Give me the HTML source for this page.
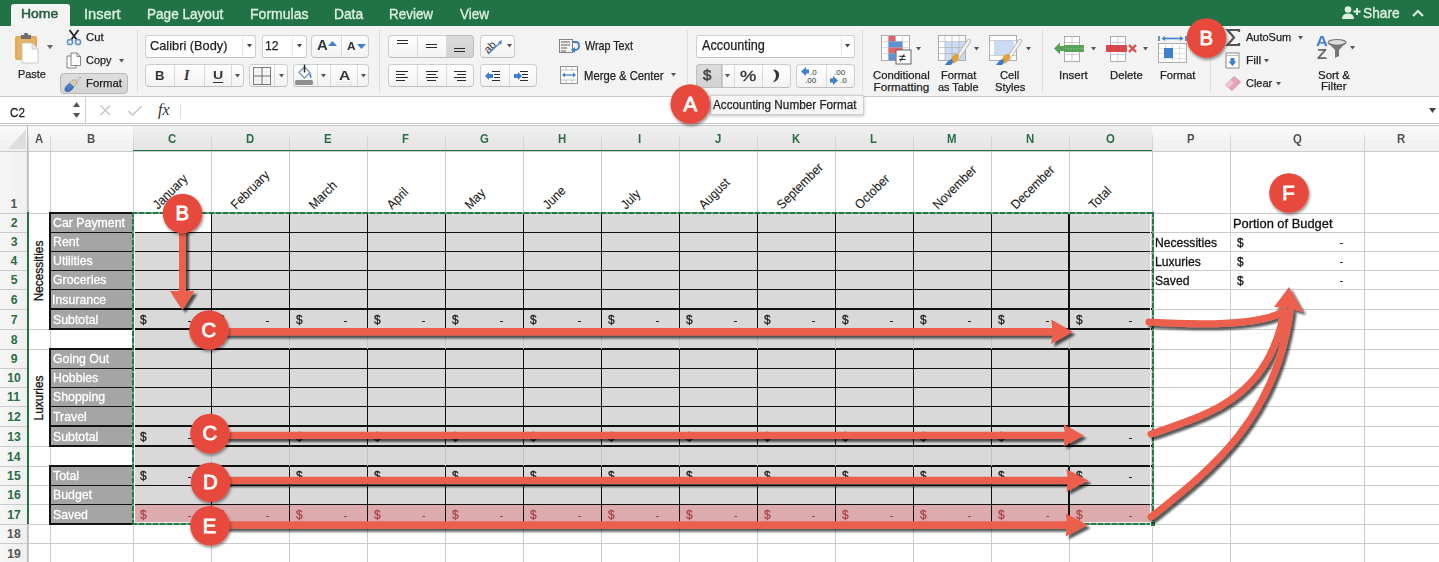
<!DOCTYPE html>
<html><head><meta charset="utf-8"><style>
html,body{margin:0;padding:0;}
body{width:1439px;height:562px;overflow:hidden;position:relative;background:#fff;font-family:"Liberation Sans",sans-serif;}
svg{position:absolute;overflow:visible;}
</style></head><body>
<div style="position:absolute;left:0px;top:0px;width:1439px;height:26px;background:#217346;"></div>
<div style="position:absolute;left:11px;top:4px;width:59px;height:23px;background:#f3f3f3;border-radius:3px 3px 0 0;"></div>
<div style="position:absolute;left:21.35px;top:7.46px;font-size:13.52px;line-height:13.52px;color:#245c3f;font-weight:normal;white-space:nowrap;transform:scaleX(1.0335);transform-origin:0 0;-webkit-text-stroke:0.5px #245c3f;">Home</div>
<div style="position:absolute;left:83.95px;top:6.70px;font-size:14.54px;line-height:14.54px;color:#dcf1df;font-weight:normal;white-space:nowrap;transform:scaleX(1.0085);transform-origin:0 0;-webkit-text-stroke:0.35px #dcf1df;">Insert</div>
<div style="position:absolute;left:147.39px;top:6.70px;font-size:14.54px;line-height:14.54px;color:#dcf1df;font-weight:normal;white-space:nowrap;transform:scaleX(0.9337);transform-origin:0 0;-webkit-text-stroke:0.35px #dcf1df;">Page Layout</div>
<div style="position:absolute;left:250.35px;top:6.70px;font-size:14.54px;line-height:14.54px;color:#dcf1df;font-weight:normal;white-space:nowrap;transform:scaleX(0.9667);transform-origin:0 0;-webkit-text-stroke:0.35px #dcf1df;">Formulas</div>
<div style="position:absolute;left:334.07px;top:6.70px;font-size:14.54px;line-height:14.54px;color:#dcf1df;font-weight:normal;white-space:nowrap;transform:scaleX(0.9488);transform-origin:0 0;-webkit-text-stroke:0.35px #dcf1df;">Data</div>
<div style="position:absolute;left:389.20px;top:6.70px;font-size:14.54px;line-height:14.54px;color:#dcf1df;font-weight:normal;white-space:nowrap;transform:scaleX(0.9247);transform-origin:0 0;-webkit-text-stroke:0.35px #dcf1df;">Review</div>
<div style="position:absolute;left:459.94px;top:6.70px;font-size:14.54px;line-height:14.54px;color:#dcf1df;font-weight:normal;white-space:nowrap;transform:scaleX(0.9309);transform-origin:0 0;-webkit-text-stroke:0.35px #dcf1df;">View</div>
<div style="position:absolute;left:1363.37px;top:5.50px;font-size:14.54px;line-height:14.54px;color:#dcf1df;font-weight:normal;white-space:nowrap;transform:scaleX(0.9472);transform-origin:0 0;-webkit-text-stroke:0.35px #dcf1df;">Share</div>
<div style="position:absolute;left:0px;top:26px;width:1439px;height:70px;background:#f3f3f3;"></div>
<div style="position:absolute;left:0px;top:96px;width:1439px;height:1px;background:#c9c9c9;"></div>
<div style="position:absolute;left:0px;top:97px;width:1439px;height:26px;background:#fff;"></div>
<div style="position:absolute;left:0px;top:123px;width:1439px;height:1px;background:#c4c4c4;"></div>
<div style="position:absolute;left:0px;top:125px;width:1439px;height:1px;background:#c4c4c4;"></div>
<div style="position:absolute;left:85px;top:97px;width:1px;height:26px;background:#d0d0d0;"></div>
<div style="position:absolute;left:9.91px;top:105.63px;font-size:13.08px;line-height:13.08px;color:#222;font-weight:normal;white-space:nowrap;transform:scaleX(0.8896);transform-origin:0 0;-webkit-text-stroke:0.3px #222;">C2</div>
<svg style="left:14px;top:32px" width="28" height="32" viewBox="0 0 28 32"><rect x="1" y="4" width="22" height="24" rx="2" fill="#e3a95a"/><rect x="3" y="6" width="18" height="20" fill="#f0c078" opacity="0.35"/><path d="M7,3 h10 v4 h-10 z" fill="#6f6f6f"/><circle cx="12" cy="3" r="2.2" fill="#6f6f6f"/><path d="M8,11 h10 l6,6 v14 h-16 z" fill="#fff" stroke="#bdbdbd" stroke-width="0.8"/><path d="M18,11 v6 h6" fill="#eee" stroke="#bdbdbd" stroke-width="0.8"/></svg>
<svg style="left:47.0px;top:45.4px" width="6" height="4.199999999999999"><polygon points="0,0 6,0 3.0,4.199999999999999" fill="#666"/></svg>
<div style="position:absolute;left:17.61px;top:68.78px;font-size:11.83px;line-height:11.83px;color:#222;font-weight:normal;white-space:nowrap;transform:scaleX(0.9215);transform-origin:0 0;-webkit-text-stroke:0.25px #222;">Paste</div>
<svg style="left:66px;top:29px" width="16" height="17" viewBox="0 0 16 17"><path d="M3.5,1 L11,11 M12.5,1 L5,11" stroke="#222" stroke-width="1.8"/><circle cx="4" cy="13" r="2.6" fill="none" stroke="#5b8fd0" stroke-width="1.5"/><circle cx="12" cy="13" r="2.6" fill="none" stroke="#5b8fd0" stroke-width="1.5"/></svg>
<div style="position:absolute;left:86.42px;top:32.40px;font-size:10.87px;line-height:10.87px;color:#222;font-weight:normal;white-space:nowrap;transform:scaleX(1.0438);transform-origin:0 0;-webkit-text-stroke:0.25px #222;">Cut</div>
<svg style="left:66px;top:52px" width="16" height="18" viewBox="0 0 16 18"><path d="M1,4 h6 l3,3 v9 h-9 z" fill="#fff" stroke="#777" stroke-width="0.9"/><path d="M5,1 h6 l3.5,3.5 v9 h-9.5 z" fill="#fff" stroke="#777" stroke-width="0.9"/><path d="M11,1 v3.5 h3.5" fill="none" stroke="#777" stroke-width="0.9"/></svg>
<div style="position:absolute;left:86.44px;top:55.40px;font-size:10.87px;line-height:10.87px;color:#222;font-weight:normal;white-space:nowrap;transform:scaleX(1.0078);transform-origin:0 0;-webkit-text-stroke:0.25px #222;">Copy</div>
<svg style="left:119.0px;top:59.25px" width="5" height="3.5"><polygon points="0,0 5,0 2.5,3.5" fill="#555"/></svg>
<div style="position:absolute;left:60px;top:73px;width:68px;height:21px;box-sizing:border-box;border:1px solid #b9b9b9;border-radius:4px;background:linear-gradient(#dedede,#d3d3d3);"></div>
<svg style="left:63px;top:75px" width="20" height="18" viewBox="0 0 20 18"><path d="M12.5,6 L16.5,2 Q18,1.5 17.5,3 L13.5,7.5 Z" fill="#f4f4f4" stroke="#9a9a9a" stroke-width="0.7"/><path d="M9,5.5 Q11,3.5 13.5,6 Q15,8 13,10 L11,12 L6.5,8 Z" fill="#d9cdb5" stroke="#9d8f72" stroke-width="0.6"/><path d="M6.5,8 L11,12 Q9,16 5.5,17 Q3,17.5 1.5,15.5 Q1,13.5 3,11 Z" fill="#3d6fb8"/><path d="M3,13 L8,9.5 M4.5,15 L9.5,11" stroke="#6f9ad6" stroke-width="0.8"/></svg>
<div style="position:absolute;left:86.07px;top:78.40px;font-size:10.87px;line-height:10.87px;color:#222;font-weight:normal;white-space:nowrap;transform:scaleX(1.0460);transform-origin:0 0;-webkit-text-stroke:0.25px #222;">Format</div>
<div style="position:absolute;left:137px;top:30px;width:1px;height:62px;background:#dedede;"></div>
<div style="position:absolute;left:145px;top:35px;width:111px;height:23px;box-sizing:border-box;border:1px solid #d0d0d0;border-bottom-color:#c2c2c2;border-radius:3px;background:#fff;"></div>
<div style="position:absolute;left:241.5px;top:37px;width:1px;height:19px;background:#e6e6e6;"></div>
<div style="position:absolute;left:149.85px;top:39.30px;font-size:13.11px;line-height:13.11px;color:#222;font-weight:normal;white-space:nowrap;transform:scaleX(0.9752);transform-origin:0 0;-webkit-text-stroke:0.25px #222;">Calibri (Body)</div>
<svg style="left:247.0px;top:44.25px" width="5" height="3.5"><polygon points="0,0 5,0 2.5,3.5" fill="#444"/></svg>
<div style="position:absolute;left:262px;top:35px;width:45px;height:23px;box-sizing:border-box;border:1px solid #d0d0d0;border-bottom-color:#c2c2c2;border-radius:3px;background:#fff;"></div>
<div style="position:absolute;left:292px;top:37px;width:1px;height:19px;background:#e6e6e6;"></div>
<div style="position:absolute;left:265.07px;top:39.30px;font-size:13.11px;line-height:13.11px;color:#222;font-weight:normal;white-space:nowrap;transform:scaleX(0.9284);transform-origin:0 0;-webkit-text-stroke:0.25px #222;">12</div>
<svg style="left:297.0px;top:44.25px" width="5" height="3.5"><polygon points="0,0 5,0 2.5,3.5" fill="#444"/></svg>
<div style="position:absolute;left:311px;top:35px;width:58px;height:23px;box-sizing:border-box;border:1px solid #cdcdcd;border-bottom-color:#bdbdbd;border-radius:4px;background:linear-gradient(#fefefe,#f3f3f3);"></div>
<div style="position:absolute;left:341px;top:36px;width:1px;height:21px;background:#d9d9d9;"></div>
<div style="position:absolute;left:316.63px;top:39.31px;font-size:13.81px;line-height:13.81px;color:#333;font-weight:bold;white-space:nowrap;transform:scaleX(1.0794);transform-origin:0 0;">A</div>
<svg style="left:328px;top:41px" width="9" height="6" viewBox="0 0 9 6"><polygon points="0,5 4.5,0 9,5" fill="#3f7fcf"/></svg>
<div style="position:absolute;left:346.70px;top:41.27px;font-size:10.90px;line-height:10.90px;color:#333;font-weight:bold;white-space:nowrap;transform:scaleX(1.0938);transform-origin:0 0;">A</div>
<svg style="left:357px;top:44px" width="9" height="6" viewBox="0 0 9 6"><polygon points="0,0 9,0 4.5,5" fill="#3f7fcf"/></svg>
<div style="position:absolute;left:145px;top:64px;width:99px;height:23px;box-sizing:border-box;border:1px solid #cdcdcd;border-bottom-color:#bdbdbd;border-radius:4px;background:linear-gradient(#fefefe,#f3f3f3);"></div>
<div style="position:absolute;left:174px;top:65px;width:1px;height:21px;background:#d9d9d9;"></div>
<div style="position:absolute;left:203.5px;top:65px;width:1px;height:21px;background:#d9d9d9;"></div>
<div style="position:absolute;left:231px;top:65px;width:1px;height:21px;background:#d9d9d9;"></div>
<div style="position:absolute;left:154.62px;top:70.04px;font-size:12.35px;line-height:12.35px;color:#333;font-weight:bold;white-space:nowrap;transform:scaleX(1.0617);transform-origin:0 0;">B</div>
<div style="position:absolute;left:184px;top:68px;font-family:'Liberation Serif',serif;font-style:italic;font-weight:bold;font-size:14px;line-height:16px;color:#333;">I</div>
<div style="position:absolute;left:212.65px;top:70.27px;font-size:10.90px;line-height:10.90px;color:#333;font-weight:bold;white-space:nowrap;transform:scaleX(1.2972);transform-origin:0 0;">U</div>
<div style="position:absolute;left:213px;top:82px;width:10px;height:1.2px;background:#333;"></div>
<svg style="left:235.0px;top:73.75px" width="5" height="3.5"><polygon points="0,0 5,0 2.5,3.5" fill="#555"/></svg>
<div style="position:absolute;left:249px;top:64px;width:38.5px;height:23px;box-sizing:border-box;border:1px solid #cdcdcd;border-bottom-color:#bdbdbd;border-radius:4px;background:linear-gradient(#fefefe,#f3f3f3);"></div>
<div style="position:absolute;left:274px;top:65px;width:1px;height:21px;background:#d9d9d9;"></div>
<svg style="left:253px;top:67px" width="18" height="18" viewBox="0 0 18 18"><rect x="0.5" y="0.5" width="17" height="17" fill="none" stroke="#777" stroke-width="1"/><path d="M9,0.5 V17.5 M0.5,9 H17.5" stroke="#666" stroke-width="1"/><path d="M4.75,0.5 V17.5 M13.25,0.5 V17.5 M0.5,4.75 H17.5 M0.5,13.25 H17.5" stroke="#ccc" stroke-width="0.6" stroke-dasharray="1,1"/></svg>
<svg style="left:278.5px;top:73.75px" width="5" height="3.5"><polygon points="0,0 5,0 2.5,3.5" fill="#555"/></svg>
<div style="position:absolute;left:293px;top:64px;width:76px;height:23px;box-sizing:border-box;border:1px solid #cdcdcd;border-bottom-color:#bdbdbd;border-radius:4px;background:linear-gradient(#fefefe,#f3f3f3);"></div>
<div style="position:absolute;left:316.5px;top:65px;width:1px;height:21px;background:#d9d9d9;"></div>
<div style="position:absolute;left:329.5px;top:65px;width:1px;height:21px;background:#d9d9d9;"></div>
<div style="position:absolute;left:357px;top:65px;width:1px;height:21px;background:#d9d9d9;"></div>
<svg style="left:294px;top:63px" width="20" height="23" viewBox="0 0 20 23"><path d="M5,9.5 L10.5,4 L16,9.5 L10.5,15 Z" fill="#fbfdff" stroke="#7f97b3" stroke-width="1.3"/><path d="M10.5,1.5 V9.5" stroke="#222" stroke-width="1.4"/><path d="M15.5,9 Q18.5,12.5 17,15.5 Q15,14 15.5,9 Z" fill="#4d86cf"/><rect x="1" y="17" width="18" height="5" rx="1.5" fill="#8f8f8f"/></svg>
<svg style="left:320.5px;top:73.75px" width="5" height="3.5"><polygon points="0,0 5,0 2.5,3.5" fill="#555"/></svg>
<div style="position:absolute;left:338.61px;top:69.54px;font-size:12.35px;line-height:12.35px;color:#333;font-weight:bold;white-space:nowrap;transform:scaleX(1.2668);transform-origin:0 0;">A</div>
<div style="position:absolute;left:336px;top:82px;width:16px;height:3px;background:#fff;border:1px solid #e3e3e3;box-sizing:border-box;"></div>
<svg style="left:361.0px;top:73.75px" width="5" height="3.5"><polygon points="0,0 5,0 2.5,3.5" fill="#555"/></svg>
<div style="position:absolute;left:378.5px;top:30px;width:1px;height:62px;background:#dedede;"></div>
<div style="position:absolute;left:388px;top:35px;width:86px;height:23px;box-sizing:border-box;border:1px solid #cdcdcd;border-bottom-color:#bdbdbd;border-radius:4px;background:linear-gradient(#fefefe,#f3f3f3);"></div>
<div style="position:absolute;left:446px;top:35px;width:28px;height:23px;box-sizing:border-box;border:1px solid #bdbdbd;border-radius:0 4px 4px 0;background:linear-gradient(#dcdcdc,#d2d2d2);"></div>
<div style="position:absolute;left:417px;top:36px;width:1px;height:21px;background:#d9d9d9;"></div>
<div style="position:absolute;left:446px;top:36px;width:1px;height:21px;background:#d9d9d9;"></div>
<div style="position:absolute;left:397px;top:40px;width:11px;height:1px;background:#2a2a2a;"></div>
<div style="position:absolute;left:397px;top:43px;width:11px;height:1px;background:#2a2a2a;"></div>
<div style="position:absolute;left:426px;top:44px;width:11px;height:1px;background:#2a2a2a;"></div>
<div style="position:absolute;left:426px;top:47px;width:11px;height:1px;background:#2a2a2a;"></div>
<div style="position:absolute;left:454px;top:48px;width:11px;height:1px;background:#2a2a2a;"></div>
<div style="position:absolute;left:454px;top:51px;width:11px;height:1px;background:#2a2a2a;"></div>
<div style="position:absolute;left:480px;top:35px;width:34.5px;height:23px;box-sizing:border-box;border:1px solid #cdcdcd;border-bottom-color:#bdbdbd;border-radius:4px;background:linear-gradient(#fefefe,#f3f3f3);"></div>
<svg style="left:484px;top:37px" width="20" height="19" viewBox="0 0 20 19"><text x="0" y="13" font-family="Liberation Sans" font-size="11" fill="#333" transform="rotate(-45 7 10)">ab</text><path d="M4,17 L17,5" stroke="#4d86cf" stroke-width="1.3"/><polygon points="18,3 14,5 17,8" fill="#4d86cf"/></svg>
<svg style="left:507.0px;top:44.25px" width="5" height="3.5"><polygon points="0,0 5,0 2.5,3.5" fill="#555"/></svg>
<div style="position:absolute;left:388px;top:64px;width:86px;height:23px;box-sizing:border-box;border:1px solid #cdcdcd;border-bottom-color:#bdbdbd;border-radius:4px;background:linear-gradient(#fefefe,#f3f3f3);"></div>
<div style="position:absolute;left:417px;top:65px;width:1px;height:21px;background:#d9d9d9;"></div>
<div style="position:absolute;left:446px;top:65px;width:1px;height:21px;background:#d9d9d9;"></div>
<div style="position:absolute;left:396px;top:71px;width:12px;height:1px;background:#2a2a2a;"></div>
<div style="position:absolute;left:396px;top:74px;width:9px;height:1px;background:#2a2a2a;"></div>
<div style="position:absolute;left:396px;top:77px;width:12px;height:1px;background:#2a2a2a;"></div>
<div style="position:absolute;left:396px;top:80px;width:9px;height:1px;background:#2a2a2a;"></div>
<div style="position:absolute;left:426px;top:71px;width:12px;height:1px;background:#2a2a2a;"></div>
<div style="position:absolute;left:427px;top:74px;width:9px;height:1px;background:#2a2a2a;"></div>
<div style="position:absolute;left:426px;top:77px;width:12px;height:1px;background:#2a2a2a;"></div>
<div style="position:absolute;left:427px;top:80px;width:9px;height:1px;background:#2a2a2a;"></div>
<div style="position:absolute;left:454px;top:71px;width:12px;height:1px;background:#2a2a2a;"></div>
<div style="position:absolute;left:457px;top:74px;width:9px;height:1px;background:#2a2a2a;"></div>
<div style="position:absolute;left:454px;top:77px;width:12px;height:1px;background:#2a2a2a;"></div>
<div style="position:absolute;left:457px;top:80px;width:9px;height:1px;background:#2a2a2a;"></div>
<div style="position:absolute;left:480px;top:64px;width:57px;height:23px;box-sizing:border-box;border:1px solid #cdcdcd;border-bottom-color:#bdbdbd;border-radius:4px;background:linear-gradient(#fefefe,#f3f3f3);"></div>
<div style="position:absolute;left:508.5px;top:65px;width:1px;height:21px;background:#d9d9d9;"></div>
<div style="position:absolute;left:492px;top:71px;width:8px;height:1px;background:#2a2a2a;"></div>
<div style="position:absolute;left:494px;top:74px;width:6px;height:1px;background:#2a2a2a;"></div>
<div style="position:absolute;left:494px;top:77px;width:6px;height:1px;background:#2a2a2a;"></div>
<div style="position:absolute;left:492px;top:80px;width:8px;height:1px;background:#2a2a2a;"></div>
<svg style="left:485px;top:72px" width="8" height="8" viewBox="0 0 8 8"><polygon points="0,4 4,0 4,2 8,2 8,6 4,6 4,8" fill="#3f7fcf"/></svg>
<div style="position:absolute;left:520px;top:71px;width:8px;height:1px;background:#2a2a2a;"></div>
<div style="position:absolute;left:522px;top:74px;width:6px;height:1px;background:#2a2a2a;"></div>
<div style="position:absolute;left:522px;top:77px;width:6px;height:1px;background:#2a2a2a;"></div>
<div style="position:absolute;left:520px;top:80px;width:8px;height:1px;background:#2a2a2a;"></div>
<svg style="left:513.5px;top:72px" width="8" height="8" viewBox="0 0 8 8"><polygon points="8,4 4,0 4,2 0,2 0,6 4,6 4,8" fill="#3f7fcf"/></svg>
<svg style="left:559px;top:39px" width="22" height="15" viewBox="0 0 22 15"><rect x="0.5" y="0.5" width="13" height="13" fill="none" stroke="#777" stroke-width="0.9"/><path d="M2,3 h9 M2,6 h9 M2,9 h6 M2,12 h5" stroke="#555" stroke-width="0.9"/><path d="M14,3 h3 q3,0 3,4 q0,4 -4,4 h-2" fill="none" stroke="#3f7fcf" stroke-width="1.8"/><polygon points="12,11 16,8 16,14" fill="#3f7fcf"/></svg>
<div style="position:absolute;left:584.75px;top:39.85px;font-size:11.99px;line-height:11.99px;color:#222;font-weight:normal;white-space:nowrap;transform:scaleX(0.8955);transform-origin:0 0;-webkit-text-stroke:0.25px #222;">Wrap Text</div>
<svg style="left:560px;top:66px" width="19" height="19" viewBox="0 0 19 19"><rect x="0.5" y="0.5" width="17" height="17" fill="#fff" stroke="#888" stroke-width="0.9"/><path d="M0.5,4 h17 M0.5,14 h17 M6,14 v4 M12,14 v4 M6,0 v4 M12,0 v4" stroke="#aaa" stroke-width="0.7"/><path d="M3,9 h12" stroke="#3f7fcf" stroke-width="1.3"/><polygon points="2,9 5,6.5 5,11.5" fill="#3f7fcf"/><polygon points="16,9 13,6.5 13,11.5" fill="#3f7fcf"/></svg>
<div style="position:absolute;left:583.88px;top:69.85px;font-size:11.99px;line-height:11.99px;color:#222;font-weight:normal;white-space:nowrap;transform:scaleX(0.9394);transform-origin:0 0;-webkit-text-stroke:0.25px #222;">Merge &amp; Center</div>
<svg style="left:670.5px;top:73.25px" width="5" height="3.5"><polygon points="0,0 5,0 2.5,3.5" fill="#555"/></svg>
<div style="position:absolute;left:687px;top:30px;width:1px;height:62px;background:#dedede;"></div>
<div style="position:absolute;left:696px;top:35px;width:159px;height:23px;box-sizing:border-box;border:1px solid #d0d0d0;border-bottom-color:#c2c2c2;border-radius:3px;background:#fff;"></div>
<div style="position:absolute;left:840.5px;top:37px;width:1px;height:19px;background:#e6e6e6;"></div>
<div style="position:absolute;left:701.98px;top:38.56px;font-size:13.75px;line-height:13.75px;color:#222;font-weight:normal;white-space:nowrap;transform:scaleX(0.9237);transform-origin:0 0;-webkit-text-stroke:0.25px #222;">Accounting</div>
<svg style="left:845.0px;top:44.25px" width="5" height="3.5"><polygon points="0,0 5,0 2.5,3.5" fill="#444"/></svg>
<div style="position:absolute;left:696px;top:64px;width:95px;height:24px;box-sizing:border-box;border:1px solid #cdcdcd;border-bottom-color:#bdbdbd;border-radius:4px;background:linear-gradient(#fefefe,#f3f3f3);"></div>
<div style="position:absolute;left:696px;top:64px;width:26px;height:24px;box-sizing:border-box;border:1px solid #bdbdbd;border-radius:4px 0 0 4px;background:linear-gradient(#dcdcdc,#d2d2d2);"></div>
<div style="position:absolute;left:733.5px;top:65px;width:1px;height:22px;background:#d9d9d9;"></div>
<div style="position:absolute;left:762px;top:65px;width:1px;height:22px;background:#d9d9d9;"></div>
<div style="position:absolute;left:722px;top:65px;width:1px;height:22px;background:#d0d0d0;"></div>
<div style="position:absolute;left:703.34px;top:69.31px;font-size:13.81px;line-height:13.81px;color:#444;font-weight:normal;white-space:nowrap;transform:scaleX(1.0946);transform-origin:0 0;-webkit-text-stroke:0.5px #444;">$</div>
<svg style="left:725.0px;top:73.75px" width="5" height="3.5"><polygon points="0,0 5,0 2.5,3.5" fill="#555"/></svg>
<div style="position:absolute;left:739.85px;top:69.81px;font-size:13.81px;line-height:13.81px;color:#333;font-weight:normal;white-space:nowrap;transform:scaleX(1.3282);transform-origin:0 0;-webkit-text-stroke:0.3px #333;">%</div>
<svg style="left:771px;top:68px" width="10" height="16" viewBox="0 0 10 16"><path d="M2,1.5 Q9,2 8,8 Q7,13 2,14.5 Q5,11 5,8 Q5,4.5 2,1.5 Z" fill="#333"/></svg>
<div style="position:absolute;left:796px;top:64px;width:59px;height:24px;box-sizing:border-box;border:1px solid #cdcdcd;border-bottom-color:#bdbdbd;border-radius:4px;background:linear-gradient(#fefefe,#f3f3f3);"></div>
<div style="position:absolute;left:826.3px;top:65px;width:1px;height:22px;background:#d9d9d9;"></div>
<svg style="left:801px;top:67px" width="22" height="18" viewBox="0 0 22 18"><polygon points="0,4.5 5,0 5,2.5 8,2.5 8,6.5 5,6.5 5,9" fill="#3f7fcf"/><text x="9" y="8" font-family="Liberation Sans" font-size="8" fill="#333">.0</text><text x="4" y="16" font-family="Liberation Sans" font-size="8" fill="#333">.00</text></svg>
<svg style="left:830px;top:67px" width="22" height="18" viewBox="0 0 22 18"><text x="4" y="8" font-family="Liberation Sans" font-size="8" fill="#333">.00</text><polygon points="8,13.5 3,9 3,11.5 0,11.5 0,15.5 3,15.5 3,18" fill="#3f7fcf"/><text x="10" y="16" font-family="Liberation Sans" font-size="8" fill="#333">.0</text></svg>
<div style="position:absolute;left:862px;top:30px;width:1px;height:62px;background:#dedede;"></div>
<svg style="left:881px;top:35px" width="32" height="30" viewBox="0 0 32 30"><rect x="0.5" y="0.5" width="28" height="25" fill="#fff" stroke="#999" stroke-width="0.8"/><path d="M0.5,6.5 h28 M0.5,12.5 h28 M0.5,18.5 h28 M7.5,0 v26 M14.5,0 v26 M21.5,0 v26" stroke="#ccc" stroke-width="0.7"/><rect x="7.5" y="1" width="7" height="5.5" fill="#e0656a"/><rect x="7.5" y="6.5" width="14" height="6" fill="#5b93d6"/><rect x="7.5" y="12.5" width="14" height="6" fill="#e0656a"/><rect x="7.5" y="18.5" width="7" height="7" fill="#5b93d6"/><rect x="15" y="15" width="15" height="14" fill="#fff" stroke="#555" stroke-width="0.9"/><text x="17.5" y="27" font-family="Liberation Sans" font-size="13" fill="#222">≠</text></svg>
<svg style="left:916.0px;top:47.25px" width="5" height="3.5"><polygon points="0,0 5,0 2.5,3.5" fill="#555"/></svg>
<div style="position:absolute;left:873.42px;top:68.92px;font-size:11.67px;line-height:11.67px;color:#222;font-weight:normal;white-space:nowrap;transform:scaleX(0.9715);transform-origin:0 0;-webkit-text-stroke:0.25px #222;">Conditional</div>
<div style="position:absolute;left:873.54px;top:81.12px;font-size:11.67px;line-height:11.67px;color:#222;font-weight:normal;white-space:nowrap;-webkit-text-stroke:0.25px #222;">Formatting</div>
<svg style="left:938px;top:35px" width="34" height="31" viewBox="0 0 34 31"><rect x="0.5" y="0.5" width="27" height="25" fill="#fff" stroke="#999" stroke-width="0.8"/><rect x="7" y="7" width="20" height="18" fill="#c9dcf3"/><path d="M0.5,6.5 h27 M0.5,12.5 h27 M0.5,18.5 h27 M7,0 v26 M14,0 v26 M21,0 v26" stroke="#aaa" stroke-width="0.6"/><path d="M31,6 L19,24" stroke="#bbb" stroke-width="4.5" stroke-linecap="round"/><path d="M31,6 L19,24" stroke="#f2f2f2" stroke-width="2.5" stroke-linecap="round"/><path d="M13,24 Q16,17 21,20 Q22,25 15,29 Z" fill="#e3a03a"/><path d="M7,30 Q10,25 14,24 Q16,27 13,30 Z" fill="#3b78d0"/></svg>
<svg style="left:974.0px;top:47.25px" width="5" height="3.5"><polygon points="0,0 5,0 2.5,3.5" fill="#555"/></svg>
<div style="position:absolute;left:940.58px;top:68.92px;font-size:11.67px;line-height:11.67px;color:#222;font-weight:normal;white-space:nowrap;transform:scaleX(0.9604);transform-origin:0 0;-webkit-text-stroke:0.25px #222;">Format</div>
<div style="position:absolute;left:938.04px;top:81.12px;font-size:11.67px;line-height:11.67px;color:#222;font-weight:normal;white-space:nowrap;transform:scaleX(0.9371);transform-origin:0 0;-webkit-text-stroke:0.25px #222;">as Table</div>
<svg style="left:989px;top:35px" width="34" height="31" viewBox="0 0 34 31"><rect x="0.5" y="0.5" width="27" height="25" fill="#fff" stroke="#999" stroke-width="0.8"/><rect x="5" y="6" width="20" height="14" fill="#c9dcf3"/><path d="M0.5,5.5 h27 M0.5,20.5 h27" stroke="#aaa" stroke-width="0.6"/><path d="M31,6 L19,24" stroke="#bbb" stroke-width="4.5" stroke-linecap="round"/><path d="M31,6 L19,24" stroke="#f2f2f2" stroke-width="2.5" stroke-linecap="round"/><path d="M13,24 Q16,17 21,20 Q22,25 15,29 Z" fill="#e3a03a"/><path d="M7,30 Q10,25 14,24 Q16,27 13,30 Z" fill="#3b78d0"/></svg>
<svg style="left:1025.5px;top:47.25px" width="5" height="3.5"><polygon points="0,0 5,0 2.5,3.5" fill="#555"/></svg>
<div style="position:absolute;left:1000.43px;top:68.92px;font-size:11.67px;line-height:11.67px;color:#222;font-weight:normal;white-space:nowrap;transform:scaleX(0.9609);transform-origin:0 0;-webkit-text-stroke:0.25px #222;">Cell</div>
<div style="position:absolute;left:994.99px;top:81.12px;font-size:11.67px;line-height:11.67px;color:#222;font-weight:normal;white-space:nowrap;transform:scaleX(0.9568);transform-origin:0 0;-webkit-text-stroke:0.25px #222;">Styles</div>
<div style="position:absolute;left:1042px;top:30px;width:1px;height:62px;background:#dedede;"></div>
<svg style="left:1054px;top:36px" width="32" height="27" viewBox="0 0 32 27"><rect x="10.5" y="0.5" width="15" height="25" fill="#fff" stroke="#999" stroke-width="0.8"/><path d="M10.5,6.5 h15 M10.5,12.5 h15 M10.5,18.5 h15 M18,0 v26" stroke="#bbb" stroke-width="0.7"/><rect x="10" y="9" width="20" height="7" rx="1" fill="#58a35a"/><path d="M10,12.5 h20" stroke="#8cc28e" stroke-width="0.6" stroke-dasharray="2,1"/><polygon points="0,12.5 6,6.5 6,18.5" fill="#58a35a"/><rect x="5" y="10" width="6" height="5" fill="#58a35a"/></svg>
<svg style="left:1091.0px;top:46.75px" width="5" height="3.5"><polygon points="0,0 5,0 2.5,3.5" fill="#555"/></svg>
<div style="position:absolute;left:1059.44px;top:68.92px;font-size:11.67px;line-height:11.67px;color:#222;font-weight:normal;white-space:nowrap;transform:scaleX(0.9883);transform-origin:0 0;-webkit-text-stroke:0.25px #222;">Insert</div>
<svg style="left:1106px;top:36px" width="32" height="27" viewBox="0 0 32 27"><rect x="4.5" y="0.5" width="15" height="25" fill="#fff" stroke="#999" stroke-width="0.8"/><path d="M4.5,6.5 h15 M4.5,12.5 h15 M4.5,18.5 h15 M12,0 v26" stroke="#bbb" stroke-width="0.7"/><rect x="0" y="9" width="21" height="7" rx="1" fill="#d9474a"/><path d="M23,9 L30,16 M30,9 L23,16" stroke="#d9474a" stroke-width="2.2"/></svg>
<svg style="left:1143.0px;top:46.75px" width="5" height="3.5"><polygon points="0,0 5,0 2.5,3.5" fill="#555"/></svg>
<div style="position:absolute;left:1109.67px;top:68.92px;font-size:11.67px;line-height:11.67px;color:#222;font-weight:normal;white-space:nowrap;transform:scaleX(0.9733);transform-origin:0 0;-webkit-text-stroke:0.25px #222;">Delete</div>
<svg style="left:1158px;top:34px" width="31" height="29" viewBox="0 0 31 29"><path d="M1,2 v5 M28,2 v5" stroke="#3f7fcf" stroke-width="1.6"/><path d="M5,4.5 h19" stroke="#3f7fcf" stroke-width="1.6"/><polygon points="3.5,4.5 7,2 7,7" fill="#3f7fcf"/><polygon points="25.5,4.5 22,2 22,7" fill="#3f7fcf"/><rect x="0.5" y="9.5" width="28" height="19" fill="#fff" stroke="#999" stroke-width="0.8"/><path d="M0.5,14.5 h28 M0.5,19.5 h28 M0.5,24.5 h28 M7.5,9 v20 M14.5,9 v20 M21.5,9 v20" stroke="#ccc" stroke-width="0.6"/><rect x="6" y="14" width="9" height="10" fill="#3f7fcf"/></svg>
<div style="position:absolute;left:1159.58px;top:68.92px;font-size:11.67px;line-height:11.67px;color:#222;font-weight:normal;white-space:nowrap;transform:scaleX(0.9604);transform-origin:0 0;-webkit-text-stroke:0.25px #222;">Format</div>
<div style="position:absolute;left:1210px;top:30px;width:1px;height:62px;background:#dedede;"></div>
<svg style="left:1226px;top:29px" width="15" height="17" viewBox="0 0 15 17"><path d="M13,3 V1 H1.5 L8,8.5 L1.5,16 H13 V14" fill="none" stroke="#555" stroke-width="2.2"/></svg>
<div style="position:absolute;left:1246.48px;top:32.19px;font-size:11.35px;line-height:11.35px;color:#222;font-weight:normal;white-space:nowrap;transform:scaleX(0.9690);transform-origin:0 0;-webkit-text-stroke:0.25px #222;">AutoSum</div>
<svg style="left:1297.5px;top:35.75px" width="5" height="3.5"><polygon points="0,0 5,0 2.5,3.5" fill="#555"/></svg>
<svg style="left:1225px;top:52px" width="16" height="18" viewBox="0 0 16 18"><rect x="1" y="1" width="13" height="15" fill="#fff" stroke="#8a8a8a" stroke-width="1"/><path d="M1,3.5 h13" stroke="#bbb" stroke-width="1"/><polygon points="7.5,14 3.5,9.5 5.5,9.5 5.5,6 9.5,6 9.5,9.5 11.5,9.5" fill="#3f7fcf"/></svg>
<div style="position:absolute;left:1245.52px;top:54.79px;font-size:11.35px;line-height:11.35px;color:#222;font-weight:normal;white-space:nowrap;transform:scaleX(1.0539);transform-origin:0 0;-webkit-text-stroke:0.25px #222;">Fill</div>
<svg style="left:1264.0px;top:59.25px" width="5" height="3.5"><polygon points="0,0 5,0 2.5,3.5" fill="#555"/></svg>
<svg style="left:1224px;top:75px" width="18" height="17" viewBox="0 0 18 17"><path d="M10,1.5 L16.5,7 L8,15.5 L1.5,10 Z" fill="#e9a3b8" stroke="#c7869a" stroke-width="0.8"/><path d="M4.5,13 L1.5,10 L6.5,5 L9.5,8 Z" fill="#f3c6d3"/></svg>
<div style="position:absolute;left:1245.94px;top:77.89px;font-size:11.35px;line-height:11.35px;color:#222;font-weight:normal;white-space:nowrap;transform:scaleX(0.9673);transform-origin:0 0;-webkit-text-stroke:0.25px #222;">Clear</div>
<svg style="left:1276.0px;top:82.25px" width="5" height="3.5"><polygon points="0,0 5,0 2.5,3.5" fill="#555"/></svg>
<div style="position:absolute;left:1315.59px;top:35.19px;font-size:13.95px;line-height:13.95px;color:#3f7fcf;font-weight:bold;white-space:nowrap;transform:scaleX(1.1750);transform-origin:0 0;">A</div>
<div style="position:absolute;left:1316.51px;top:48.19px;font-size:13.95px;line-height:13.95px;color:#666;font-weight:bold;white-space:nowrap;transform:scaleX(1.1679);transform-origin:0 0;">Z</div>
<svg style="left:1327px;top:39px" width="20" height="20" viewBox="0 0 20 20"><ellipse cx="10" cy="3.5" rx="9" ry="3" fill="#ddd" stroke="#777" stroke-width="1.2"/><path d="M1,3.5 L8,11 V19 L12,17 V11 L19,3.5 Q10,8 1,3.5 Z" fill="#777"/></svg>
<svg style="left:1349.5px;top:46.25px" width="5" height="3.5"><polygon points="0,0 5,0 2.5,3.5" fill="#555"/></svg>
<div style="position:absolute;left:1317.98px;top:69.59px;font-size:11.35px;line-height:11.35px;color:#222;font-weight:normal;white-space:nowrap;transform:scaleX(1.0113);transform-origin:0 0;-webkit-text-stroke:0.25px #222;">Sort &amp;</div>
<div style="position:absolute;left:1320.55px;top:80.79px;font-size:11.35px;line-height:11.35px;color:#222;font-weight:normal;white-space:nowrap;transform:scaleX(1.0163);transform-origin:0 0;-webkit-text-stroke:0.25px #222;">Filter</div>
<svg style="left:1342px;top:6px" width="19" height="14" viewBox="0 0 19 14"><circle cx="6" cy="3.5" r="3.3" fill="#dcf1df"/><path d="M0,13 Q0,7.5 6,7.5 Q12,7.5 12,13 Z" fill="#dcf1df"/><path d="M11.5,5.5 h7 M15,2 v7" stroke="#dcf1df" stroke-width="1.8"/></svg>
<svg style="left:1412px;top:9px" width="12" height="8" viewBox="0 0 12 8"><path d="M1,7 L6,2 L11,7" fill="none" stroke="#dcf1df" stroke-width="2.2"/></svg>
<svg style="left:72px;top:101px" width="10" height="19" viewBox="0 0 10 19"><polygon points="1,6 4.5,1 8,6" fill="#555"/><polygon points="1,12 8,12 4.5,17" fill="#555"/></svg>
<svg style="left:99px;top:104px" width="13" height="13" viewBox="0 0 13 13"><path d="M1.5,1.5 L11,11 M11,1.5 L1.5,11" stroke="#c4c4c4" stroke-width="1.4"/></svg>
<svg style="left:127px;top:105px" width="16" height="12" viewBox="0 0 16 12"><path d="M1.5,6 L5.5,10 L14.5,1.5" fill="none" stroke="#c4c4c4" stroke-width="1.5"/></svg>
<div style="position:absolute;left:158px;top:102px;font-family:'Liberation Serif',serif;font-style:italic;font-size:16px;line-height:16px;color:#333;">fx</div>
<div style="position:absolute;left:180px;top:104px;width:1px;height:15px;background:#e0e0e0;"></div>
<svg style="left:1429.0px;top:107.55px" width="7" height="4.8999999999999995"><polygon points="0,0 7,0 3.5,4.8999999999999995" fill="#444"/></svg>
<div style="position:absolute;left:0px;top:126px;width:1439px;height:25px;background:linear-gradient(#f9f9f9,#f0f0f0);"></div>
<div style="position:absolute;left:133px;top:126px;width:1019px;height:25px;background:linear-gradient(#f0f0f0,#e3e3e3);"></div>
<div style="position:absolute;left:28px;top:132px;width:1px;height:19px;background:linear-gradient(rgba(216,216,216,0),#d4d4d4 40%);"></div>
<div style="position:absolute;left:50px;top:132px;width:1px;height:19px;background:linear-gradient(rgba(216,216,216,0),#d4d4d4 40%);"></div>
<div style="position:absolute;left:133px;top:132px;width:1px;height:19px;background:linear-gradient(rgba(216,216,216,0),#d4d4d4 40%);"></div>
<div style="position:absolute;left:211px;top:132px;width:1px;height:19px;background:linear-gradient(rgba(216,216,216,0),#d4d4d4 40%);"></div>
<div style="position:absolute;left:289px;top:132px;width:1px;height:19px;background:linear-gradient(rgba(216,216,216,0),#d4d4d4 40%);"></div>
<div style="position:absolute;left:367px;top:132px;width:1px;height:19px;background:linear-gradient(rgba(216,216,216,0),#d4d4d4 40%);"></div>
<div style="position:absolute;left:445px;top:132px;width:1px;height:19px;background:linear-gradient(rgba(216,216,216,0),#d4d4d4 40%);"></div>
<div style="position:absolute;left:523px;top:132px;width:1px;height:19px;background:linear-gradient(rgba(216,216,216,0),#d4d4d4 40%);"></div>
<div style="position:absolute;left:601px;top:132px;width:1px;height:19px;background:linear-gradient(rgba(216,216,216,0),#d4d4d4 40%);"></div>
<div style="position:absolute;left:679px;top:132px;width:1px;height:19px;background:linear-gradient(rgba(216,216,216,0),#d4d4d4 40%);"></div>
<div style="position:absolute;left:757px;top:132px;width:1px;height:19px;background:linear-gradient(rgba(216,216,216,0),#d4d4d4 40%);"></div>
<div style="position:absolute;left:835px;top:132px;width:1px;height:19px;background:linear-gradient(rgba(216,216,216,0),#d4d4d4 40%);"></div>
<div style="position:absolute;left:913px;top:132px;width:1px;height:19px;background:linear-gradient(rgba(216,216,216,0),#d4d4d4 40%);"></div>
<div style="position:absolute;left:991px;top:132px;width:1px;height:19px;background:linear-gradient(rgba(216,216,216,0),#d4d4d4 40%);"></div>
<div style="position:absolute;left:1069px;top:132px;width:1px;height:19px;background:linear-gradient(rgba(216,216,216,0),#d4d4d4 40%);"></div>
<div style="position:absolute;left:1152px;top:132px;width:1px;height:19px;background:linear-gradient(rgba(216,216,216,0),#d4d4d4 40%);"></div>
<div style="position:absolute;left:1230px;top:132px;width:1px;height:19px;background:linear-gradient(rgba(216,216,216,0),#d4d4d4 40%);"></div>
<div style="position:absolute;left:1364px;top:132px;width:1px;height:19px;background:linear-gradient(rgba(216,216,216,0),#d4d4d4 40%);"></div>
<div style="position:absolute;left:0px;top:151px;width:1439px;height:1px;background:#c4c4c4;"></div>
<div style="position:absolute;left:133px;top:150px;width:1019px;height:2px;background:#217346;"></div>
<div style="position:absolute;left:34.90px;top:133.30px;font-size:12.65px;line-height:12.65px;color:#505050;font-weight:bold;white-space:nowrap;transform:scaleX(0.9000);transform-origin:0 0;">A</div>
<div style="position:absolute;left:87.27px;top:133.30px;font-size:12.65px;line-height:12.65px;color:#505050;font-weight:bold;white-space:nowrap;transform:scaleX(0.9000);transform-origin:0 0;">B</div>
<div style="position:absolute;left:167.81px;top:133.30px;font-size:12.65px;line-height:12.65px;color:#2a6e48;font-weight:bold;white-space:nowrap;transform:scaleX(0.9000);transform-origin:0 0;">C</div>
<div style="position:absolute;left:245.75px;top:133.30px;font-size:12.65px;line-height:12.65px;color:#2a6e48;font-weight:bold;white-space:nowrap;transform:scaleX(0.9000);transform-origin:0 0;">D</div>
<div style="position:absolute;left:324.05px;top:133.30px;font-size:12.65px;line-height:12.65px;color:#2a6e48;font-weight:bold;white-space:nowrap;transform:scaleX(0.9000);transform-origin:0 0;">E</div>
<div style="position:absolute;left:402.35px;top:133.30px;font-size:12.65px;line-height:12.65px;color:#2a6e48;font-weight:bold;white-space:nowrap;transform:scaleX(0.9000);transform-origin:0 0;">F</div>
<div style="position:absolute;left:479.69px;top:133.30px;font-size:12.65px;line-height:12.65px;color:#2a6e48;font-weight:bold;white-space:nowrap;transform:scaleX(0.9000);transform-origin:0 0;">G</div>
<div style="position:absolute;left:557.89px;top:133.30px;font-size:12.65px;line-height:12.65px;color:#2a6e48;font-weight:bold;white-space:nowrap;transform:scaleX(0.9000);transform-origin:0 0;">H</div>
<div style="position:absolute;left:638.42px;top:133.30px;font-size:12.65px;line-height:12.65px;color:#2a6e48;font-weight:bold;white-space:nowrap;transform:scaleX(0.9000);transform-origin:0 0;">I</div>
<div style="position:absolute;left:715.14px;top:133.30px;font-size:12.65px;line-height:12.65px;color:#2a6e48;font-weight:bold;white-space:nowrap;transform:scaleX(0.9000);transform-origin:0 0;">J</div>
<div style="position:absolute;left:791.56px;top:133.30px;font-size:12.65px;line-height:12.65px;color:#2a6e48;font-weight:bold;white-space:nowrap;transform:scaleX(0.9000);transform-origin:0 0;">K</div>
<div style="position:absolute;left:870.32px;top:133.30px;font-size:12.65px;line-height:12.65px;color:#2a6e48;font-weight:bold;white-space:nowrap;transform:scaleX(0.9000);transform-origin:0 0;">L</div>
<div style="position:absolute;left:947.26px;top:133.30px;font-size:12.65px;line-height:12.65px;color:#2a6e48;font-weight:bold;white-space:nowrap;transform:scaleX(0.9000);transform-origin:0 0;">M</div>
<div style="position:absolute;left:1025.89px;top:133.30px;font-size:12.65px;line-height:12.65px;color:#2a6e48;font-weight:bold;white-space:nowrap;transform:scaleX(0.9000);transform-origin:0 0;">N</div>
<div style="position:absolute;left:1106.08px;top:133.30px;font-size:12.65px;line-height:12.65px;color:#2a6e48;font-weight:bold;white-space:nowrap;transform:scaleX(0.9000);transform-origin:0 0;">O</div>
<div style="position:absolute;left:1187.02px;top:133.30px;font-size:12.65px;line-height:12.65px;color:#505050;font-weight:bold;white-space:nowrap;transform:scaleX(0.9000);transform-origin:0 0;">P</div>
<div style="position:absolute;left:1292.58px;top:133.30px;font-size:12.65px;line-height:12.65px;color:#505050;font-weight:bold;white-space:nowrap;transform:scaleX(0.9000);transform-origin:0 0;">Q</div>
<div style="position:absolute;left:1397.13px;top:133.30px;font-size:12.65px;line-height:12.65px;color:#505050;font-weight:bold;white-space:nowrap;transform:scaleX(0.9000);transform-origin:0 0;">R</div>
<svg style="left:0;top:126px" width="28" height="25"><polygon points="26,3 26,23 8,23" fill="#dedede"/></svg>
<div style="position:absolute;left:0px;top:151px;width:28px;height:411px;background:linear-gradient(90deg,#f7f7f7,#efefef);"></div>
<div style="position:absolute;left:0px;top:151px;width:1439px;height:1px;background:#cbcbcb;"></div>
<div style="position:absolute;left:0px;top:213px;width:1439px;height:1px;background:#cbcbcb;"></div>
<div style="position:absolute;left:0px;top:232px;width:1439px;height:1px;background:#cbcbcb;"></div>
<div style="position:absolute;left:0px;top:251px;width:1439px;height:1px;background:#cbcbcb;"></div>
<div style="position:absolute;left:0px;top:270px;width:1439px;height:1px;background:#cbcbcb;"></div>
<div style="position:absolute;left:0px;top:289px;width:1439px;height:1px;background:#cbcbcb;"></div>
<div style="position:absolute;left:0px;top:309px;width:1439px;height:1px;background:#cbcbcb;"></div>
<div style="position:absolute;left:0px;top:329px;width:1439px;height:1px;background:#cbcbcb;"></div>
<div style="position:absolute;left:0px;top:349px;width:1439px;height:1px;background:#cbcbcb;"></div>
<div style="position:absolute;left:0px;top:368px;width:1439px;height:1px;background:#cbcbcb;"></div>
<div style="position:absolute;left:0px;top:387px;width:1439px;height:1px;background:#cbcbcb;"></div>
<div style="position:absolute;left:0px;top:406px;width:1439px;height:1px;background:#cbcbcb;"></div>
<div style="position:absolute;left:0px;top:426px;width:1439px;height:1px;background:#cbcbcb;"></div>
<div style="position:absolute;left:0px;top:446px;width:1439px;height:1px;background:#cbcbcb;"></div>
<div style="position:absolute;left:0px;top:466px;width:1439px;height:1px;background:#cbcbcb;"></div>
<div style="position:absolute;left:0px;top:485px;width:1439px;height:1px;background:#cbcbcb;"></div>
<div style="position:absolute;left:0px;top:504px;width:1439px;height:1px;background:#cbcbcb;"></div>
<div style="position:absolute;left:0px;top:524px;width:1439px;height:1px;background:#cbcbcb;"></div>
<div style="position:absolute;left:0px;top:543px;width:1439px;height:1px;background:#cbcbcb;"></div>
<div style="position:absolute;left:0px;top:563px;width:1439px;height:1px;background:#cbcbcb;"></div>
<div style="position:absolute;left:28px;top:151px;width:1px;height:411px;background:#cbcbcb;"></div>
<div style="position:absolute;left:50px;top:151px;width:1px;height:411px;background:#cbcbcb;"></div>
<div style="position:absolute;left:133px;top:151px;width:1px;height:411px;background:#cbcbcb;"></div>
<div style="position:absolute;left:211px;top:151px;width:1px;height:411px;background:#cbcbcb;"></div>
<div style="position:absolute;left:289px;top:151px;width:1px;height:411px;background:#cbcbcb;"></div>
<div style="position:absolute;left:367px;top:151px;width:1px;height:411px;background:#cbcbcb;"></div>
<div style="position:absolute;left:445px;top:151px;width:1px;height:411px;background:#cbcbcb;"></div>
<div style="position:absolute;left:523px;top:151px;width:1px;height:411px;background:#cbcbcb;"></div>
<div style="position:absolute;left:601px;top:151px;width:1px;height:411px;background:#cbcbcb;"></div>
<div style="position:absolute;left:679px;top:151px;width:1px;height:411px;background:#cbcbcb;"></div>
<div style="position:absolute;left:757px;top:151px;width:1px;height:411px;background:#cbcbcb;"></div>
<div style="position:absolute;left:835px;top:151px;width:1px;height:411px;background:#cbcbcb;"></div>
<div style="position:absolute;left:913px;top:151px;width:1px;height:411px;background:#cbcbcb;"></div>
<div style="position:absolute;left:991px;top:151px;width:1px;height:411px;background:#cbcbcb;"></div>
<div style="position:absolute;left:1069px;top:151px;width:1px;height:411px;background:#cbcbcb;"></div>
<div style="position:absolute;left:1152px;top:151px;width:1px;height:411px;background:#cbcbcb;"></div>
<div style="position:absolute;left:1230px;top:151px;width:1px;height:411px;background:#cbcbcb;"></div>
<div style="position:absolute;left:1364px;top:151px;width:1px;height:411px;background:#cbcbcb;"></div>
<div style="position:absolute;left:27px;top:126px;width:1px;height:436px;background:#b9b9b9;"></div>
<div style="position:absolute;left:29px;top:214px;width:20px;height:115px;background:#fff;"></div>
<div style="position:absolute;left:29px;top:350px;width:20px;height:96px;background:#fff;"></div>
<div style="position:absolute;left:27px;top:212px;width:2px;height:312px;background:#217346;"></div>
<div style="position:absolute;left:10.44px;top:198.16px;font-size:12.21px;line-height:12.21px;color:#555;font-weight:bold;white-space:nowrap;">1</div>
<div style="position:absolute;left:10.69px;top:217.16px;font-size:12.21px;line-height:12.21px;color:#2a6e48;font-weight:bold;white-space:nowrap;">2</div>
<div style="position:absolute;left:10.74px;top:236.16px;font-size:12.21px;line-height:12.21px;color:#2a6e48;font-weight:bold;white-space:nowrap;">3</div>
<div style="position:absolute;left:10.60px;top:255.16px;font-size:12.21px;line-height:12.21px;color:#2a6e48;font-weight:bold;white-space:nowrap;">4</div>
<div style="position:absolute;left:10.64px;top:274.16px;font-size:12.21px;line-height:12.21px;color:#2a6e48;font-weight:bold;white-space:nowrap;">5</div>
<div style="position:absolute;left:10.65px;top:294.16px;font-size:12.21px;line-height:12.21px;color:#2a6e48;font-weight:bold;white-space:nowrap;">6</div>
<div style="position:absolute;left:10.66px;top:314.16px;font-size:12.21px;line-height:12.21px;color:#2a6e48;font-weight:bold;white-space:nowrap;">7</div>
<div style="position:absolute;left:10.65px;top:334.16px;font-size:12.21px;line-height:12.21px;color:#2a6e48;font-weight:bold;white-space:nowrap;">8</div>
<div style="position:absolute;left:10.67px;top:353.16px;font-size:12.21px;line-height:12.21px;color:#2a6e48;font-weight:bold;white-space:nowrap;">9</div>
<div style="position:absolute;left:7.18px;top:372.16px;font-size:12.21px;line-height:12.21px;color:#2a6e48;font-weight:bold;white-space:nowrap;">10</div>
<div style="position:absolute;left:7.10px;top:391.16px;font-size:12.21px;line-height:12.21px;color:#2a6e48;font-weight:bold;white-space:nowrap;">11</div>
<div style="position:absolute;left:7.18px;top:411.16px;font-size:12.21px;line-height:12.21px;color:#2a6e48;font-weight:bold;white-space:nowrap;">12</div>
<div style="position:absolute;left:7.15px;top:431.16px;font-size:12.21px;line-height:12.21px;color:#2a6e48;font-weight:bold;white-space:nowrap;">13</div>
<div style="position:absolute;left:6.97px;top:451.16px;font-size:12.21px;line-height:12.21px;color:#2a6e48;font-weight:bold;white-space:nowrap;">14</div>
<div style="position:absolute;left:7.10px;top:470.16px;font-size:12.21px;line-height:12.21px;color:#2a6e48;font-weight:bold;white-space:nowrap;">15</div>
<div style="position:absolute;left:7.15px;top:489.16px;font-size:12.21px;line-height:12.21px;color:#2a6e48;font-weight:bold;white-space:nowrap;">16</div>
<div style="position:absolute;left:7.20px;top:509.16px;font-size:12.21px;line-height:12.21px;color:#2a6e48;font-weight:bold;white-space:nowrap;">17</div>
<div style="position:absolute;left:7.12px;top:528.16px;font-size:12.21px;line-height:12.21px;color:#555;font-weight:bold;white-space:nowrap;">18</div>
<div style="position:absolute;left:7.16px;top:548.16px;font-size:12.21px;line-height:12.21px;color:#555;font-weight:bold;white-space:nowrap;">19</div>
<div style="position:absolute;left:133px;top:213px;width:1019px;height:311px;background:#d9d9d9;"></div>
<div style="position:absolute;left:133px;top:213px;width:78px;height:19px;background:#fff;"></div>
<div style="position:absolute;left:133px;top:505px;width:1019px;height:19px;background:#dcabae;"></div>
<div style="position:absolute;left:50px;top:213px;width:83px;height:116px;background:#a5a5a5;"></div>
<div style="position:absolute;left:49px;top:212px;width:84px;height:2px;background:#111;"></div>
<div style="position:absolute;left:49px;top:328px;width:84px;height:2px;background:#111;"></div>
<div style="position:absolute;left:49px;top:212px;width:2px;height:118px;background:#111;"></div>
<div style="position:absolute;left:49px;top:232px;width:84px;height:1px;background:#111;"></div>
<div style="position:absolute;left:49px;top:251px;width:84px;height:1px;background:#111;"></div>
<div style="position:absolute;left:49px;top:270px;width:84px;height:1px;background:#111;"></div>
<div style="position:absolute;left:49px;top:289px;width:84px;height:1px;background:#111;"></div>
<div style="position:absolute;left:49px;top:308px;width:84px;height:2px;background:#111;"></div>
<div style="position:absolute;left:133px;top:212px;width:1019px;height:2px;background:#111;"></div>
<div style="position:absolute;left:133px;top:328px;width:1019px;height:2px;background:#111;"></div>
<div style="position:absolute;left:133px;top:232px;width:1019px;height:1px;background:#111;"></div>
<div style="position:absolute;left:133px;top:251px;width:1019px;height:1px;background:#111;"></div>
<div style="position:absolute;left:133px;top:270px;width:1019px;height:1px;background:#111;"></div>
<div style="position:absolute;left:133px;top:289px;width:1019px;height:1px;background:#111;"></div>
<div style="position:absolute;left:133px;top:308px;width:1019px;height:2px;background:#111;"></div>
<div style="position:absolute;left:211px;top:212px;width:1px;height:118px;background:#111;"></div>
<div style="position:absolute;left:289px;top:212px;width:1px;height:118px;background:#111;"></div>
<div style="position:absolute;left:367px;top:212px;width:1px;height:118px;background:#111;"></div>
<div style="position:absolute;left:445px;top:212px;width:1px;height:118px;background:#111;"></div>
<div style="position:absolute;left:523px;top:212px;width:1px;height:118px;background:#111;"></div>
<div style="position:absolute;left:601px;top:212px;width:1px;height:118px;background:#111;"></div>
<div style="position:absolute;left:679px;top:212px;width:1px;height:118px;background:#111;"></div>
<div style="position:absolute;left:757px;top:212px;width:1px;height:118px;background:#111;"></div>
<div style="position:absolute;left:835px;top:212px;width:1px;height:118px;background:#111;"></div>
<div style="position:absolute;left:913px;top:212px;width:1px;height:118px;background:#111;"></div>
<div style="position:absolute;left:991px;top:212px;width:1px;height:118px;background:#111;"></div>
<div style="position:absolute;left:1068px;top:212px;width:2px;height:118px;background:#111;"></div>
<div style="position:absolute;left:50px;top:349px;width:83px;height:97px;background:#a5a5a5;"></div>
<div style="position:absolute;left:49px;top:348px;width:84px;height:2px;background:#111;"></div>
<div style="position:absolute;left:49px;top:445px;width:84px;height:2px;background:#111;"></div>
<div style="position:absolute;left:49px;top:348px;width:2px;height:99px;background:#111;"></div>
<div style="position:absolute;left:49px;top:368px;width:84px;height:1px;background:#111;"></div>
<div style="position:absolute;left:49px;top:387px;width:84px;height:1px;background:#111;"></div>
<div style="position:absolute;left:49px;top:406px;width:84px;height:1px;background:#111;"></div>
<div style="position:absolute;left:49px;top:425px;width:84px;height:2px;background:#111;"></div>
<div style="position:absolute;left:133px;top:348px;width:1019px;height:2px;background:#111;"></div>
<div style="position:absolute;left:133px;top:445px;width:1019px;height:2px;background:#111;"></div>
<div style="position:absolute;left:133px;top:368px;width:1019px;height:1px;background:#111;"></div>
<div style="position:absolute;left:133px;top:387px;width:1019px;height:1px;background:#111;"></div>
<div style="position:absolute;left:133px;top:406px;width:1019px;height:1px;background:#111;"></div>
<div style="position:absolute;left:133px;top:425px;width:1019px;height:2px;background:#111;"></div>
<div style="position:absolute;left:211px;top:348px;width:1px;height:99px;background:#111;"></div>
<div style="position:absolute;left:289px;top:348px;width:1px;height:99px;background:#111;"></div>
<div style="position:absolute;left:367px;top:348px;width:1px;height:99px;background:#111;"></div>
<div style="position:absolute;left:445px;top:348px;width:1px;height:99px;background:#111;"></div>
<div style="position:absolute;left:523px;top:348px;width:1px;height:99px;background:#111;"></div>
<div style="position:absolute;left:601px;top:348px;width:1px;height:99px;background:#111;"></div>
<div style="position:absolute;left:679px;top:348px;width:1px;height:99px;background:#111;"></div>
<div style="position:absolute;left:757px;top:348px;width:1px;height:99px;background:#111;"></div>
<div style="position:absolute;left:835px;top:348px;width:1px;height:99px;background:#111;"></div>
<div style="position:absolute;left:913px;top:348px;width:1px;height:99px;background:#111;"></div>
<div style="position:absolute;left:991px;top:348px;width:1px;height:99px;background:#111;"></div>
<div style="position:absolute;left:1068px;top:348px;width:2px;height:99px;background:#111;"></div>
<div style="position:absolute;left:50px;top:466px;width:83px;height:58px;background:#a5a5a5;"></div>
<div style="position:absolute;left:49px;top:465px;width:84px;height:2px;background:#111;"></div>
<div style="position:absolute;left:49px;top:523px;width:84px;height:2px;background:#111;"></div>
<div style="position:absolute;left:49px;top:465px;width:2px;height:60px;background:#111;"></div>
<div style="position:absolute;left:49px;top:485px;width:84px;height:1px;background:#111;"></div>
<div style="position:absolute;left:49px;top:504px;width:84px;height:1px;background:#111;"></div>
<div style="position:absolute;left:133px;top:465px;width:1019px;height:2px;background:#111;"></div>
<div style="position:absolute;left:133px;top:523px;width:1019px;height:2px;background:#111;"></div>
<div style="position:absolute;left:133px;top:485px;width:1019px;height:1px;background:#111;"></div>
<div style="position:absolute;left:133px;top:504px;width:1019px;height:1px;background:#111;"></div>
<div style="position:absolute;left:211px;top:465px;width:1px;height:60px;background:#111;"></div>
<div style="position:absolute;left:289px;top:465px;width:1px;height:60px;background:#111;"></div>
<div style="position:absolute;left:367px;top:465px;width:1px;height:60px;background:#111;"></div>
<div style="position:absolute;left:445px;top:465px;width:1px;height:60px;background:#111;"></div>
<div style="position:absolute;left:523px;top:465px;width:1px;height:60px;background:#111;"></div>
<div style="position:absolute;left:601px;top:465px;width:1px;height:60px;background:#111;"></div>
<div style="position:absolute;left:679px;top:465px;width:1px;height:60px;background:#111;"></div>
<div style="position:absolute;left:757px;top:465px;width:1px;height:60px;background:#111;"></div>
<div style="position:absolute;left:835px;top:465px;width:1px;height:60px;background:#111;"></div>
<div style="position:absolute;left:913px;top:465px;width:1px;height:60px;background:#111;"></div>
<div style="position:absolute;left:991px;top:465px;width:1px;height:60px;background:#111;"></div>
<div style="position:absolute;left:1068px;top:465px;width:2px;height:60px;background:#111;"></div>
<div style="position:absolute;left:211px;top:331px;width:1px;height:18px;background:#c4c4c4;"></div>
<div style="position:absolute;left:289px;top:331px;width:1px;height:18px;background:#c4c4c4;"></div>
<div style="position:absolute;left:367px;top:331px;width:1px;height:18px;background:#c4c4c4;"></div>
<div style="position:absolute;left:445px;top:331px;width:1px;height:18px;background:#c4c4c4;"></div>
<div style="position:absolute;left:523px;top:331px;width:1px;height:18px;background:#c4c4c4;"></div>
<div style="position:absolute;left:601px;top:331px;width:1px;height:18px;background:#c4c4c4;"></div>
<div style="position:absolute;left:679px;top:331px;width:1px;height:18px;background:#c4c4c4;"></div>
<div style="position:absolute;left:757px;top:331px;width:1px;height:18px;background:#c4c4c4;"></div>
<div style="position:absolute;left:835px;top:331px;width:1px;height:18px;background:#c4c4c4;"></div>
<div style="position:absolute;left:913px;top:331px;width:1px;height:18px;background:#c4c4c4;"></div>
<div style="position:absolute;left:991px;top:331px;width:1px;height:18px;background:#c4c4c4;"></div>
<div style="position:absolute;left:1069px;top:331px;width:1px;height:18px;background:#c4c4c4;"></div>
<div style="position:absolute;left:211px;top:448px;width:1px;height:18px;background:#c4c4c4;"></div>
<div style="position:absolute;left:289px;top:448px;width:1px;height:18px;background:#c4c4c4;"></div>
<div style="position:absolute;left:367px;top:448px;width:1px;height:18px;background:#c4c4c4;"></div>
<div style="position:absolute;left:445px;top:448px;width:1px;height:18px;background:#c4c4c4;"></div>
<div style="position:absolute;left:523px;top:448px;width:1px;height:18px;background:#c4c4c4;"></div>
<div style="position:absolute;left:601px;top:448px;width:1px;height:18px;background:#c4c4c4;"></div>
<div style="position:absolute;left:679px;top:448px;width:1px;height:18px;background:#c4c4c4;"></div>
<div style="position:absolute;left:757px;top:448px;width:1px;height:18px;background:#c4c4c4;"></div>
<div style="position:absolute;left:835px;top:448px;width:1px;height:18px;background:#c4c4c4;"></div>
<div style="position:absolute;left:913px;top:448px;width:1px;height:18px;background:#c4c4c4;"></div>
<div style="position:absolute;left:991px;top:448px;width:1px;height:18px;background:#c4c4c4;"></div>
<div style="position:absolute;left:1069px;top:448px;width:1px;height:18px;background:#c4c4c4;"></div>
<div style="position:absolute;left:52.97px;top:217.17px;font-size:12.79px;line-height:12.79px;color:#fff;font-weight:normal;white-space:nowrap;transform:scaleX(0.9650);transform-origin:0 0;-webkit-text-stroke:0.3px #fff;">Car Payment</div>
<div style="position:absolute;left:52.59px;top:236.17px;font-size:12.79px;line-height:12.79px;color:#fff;font-weight:normal;white-space:nowrap;transform:scaleX(0.9650);transform-origin:0 0;-webkit-text-stroke:0.3px #fff;">Rent</div>
<div style="position:absolute;left:52.65px;top:255.17px;font-size:12.79px;line-height:12.79px;color:#fff;font-weight:normal;white-space:nowrap;transform:scaleX(0.9650);transform-origin:0 0;-webkit-text-stroke:0.3px #fff;">Utilities</div>
<div style="position:absolute;left:52.98px;top:274.17px;font-size:12.79px;line-height:12.79px;color:#fff;font-weight:normal;white-space:nowrap;transform:scaleX(0.9650);transform-origin:0 0;-webkit-text-stroke:0.3px #fff;">Groceries</div>
<div style="position:absolute;left:52.46px;top:294.17px;font-size:12.79px;line-height:12.79px;color:#fff;font-weight:normal;white-space:nowrap;transform:scaleX(0.9650);transform-origin:0 0;-webkit-text-stroke:0.3px #fff;">Insurance</div>
<div style="position:absolute;left:53.04px;top:314.17px;font-size:12.79px;line-height:12.79px;color:#fff;font-weight:normal;white-space:nowrap;transform:scaleX(0.9650);transform-origin:0 0;-webkit-text-stroke:0.3px #fff;">Subtotal</div>
<div style="position:absolute;left:52.98px;top:353.17px;font-size:12.79px;line-height:12.79px;color:#fff;font-weight:normal;white-space:nowrap;transform:scaleX(0.9650);transform-origin:0 0;-webkit-text-stroke:0.3px #fff;">Going Out</div>
<div style="position:absolute;left:52.59px;top:372.17px;font-size:12.79px;line-height:12.79px;color:#fff;font-weight:normal;white-space:nowrap;transform:scaleX(0.9650);transform-origin:0 0;-webkit-text-stroke:0.3px #fff;">Hobbies</div>
<div style="position:absolute;left:53.04px;top:391.17px;font-size:12.79px;line-height:12.79px;color:#fff;font-weight:normal;white-space:nowrap;transform:scaleX(0.9650);transform-origin:0 0;-webkit-text-stroke:0.3px #fff;">Shopping</div>
<div style="position:absolute;left:53.32px;top:411.17px;font-size:12.79px;line-height:12.79px;color:#fff;font-weight:normal;white-space:nowrap;transform:scaleX(0.9650);transform-origin:0 0;-webkit-text-stroke:0.3px #fff;">Travel</div>
<div style="position:absolute;left:53.04px;top:431.17px;font-size:12.79px;line-height:12.79px;color:#fff;font-weight:normal;white-space:nowrap;transform:scaleX(0.9650);transform-origin:0 0;-webkit-text-stroke:0.3px #fff;">Subtotal</div>
<div style="position:absolute;left:53.32px;top:470.17px;font-size:12.79px;line-height:12.79px;color:#fff;font-weight:normal;white-space:nowrap;transform:scaleX(0.9650);transform-origin:0 0;-webkit-text-stroke:0.3px #fff;">Total</div>
<div style="position:absolute;left:52.59px;top:489.17px;font-size:12.79px;line-height:12.79px;color:#fff;font-weight:normal;white-space:nowrap;transform:scaleX(0.9650);transform-origin:0 0;-webkit-text-stroke:0.3px #fff;">Budget</div>
<div style="position:absolute;left:53.04px;top:509.17px;font-size:12.79px;line-height:12.79px;color:#fff;font-weight:normal;white-space:nowrap;transform:scaleX(0.9650);transform-origin:0 0;-webkit-text-stroke:0.3px #fff;">Saved</div>
<div style="position:absolute;left:139.87px;top:313.82px;font-size:12.50px;line-height:12.50px;color:#222;font-weight:normal;white-space:nowrap;transform:scaleX(0.9500);transform-origin:0 0;-webkit-text-stroke:0.3px #222;">$</div>
<div style="position:absolute;left:188px;top:321px;width:3px;height:1.3px;background:#222;"></div>
<div style="position:absolute;left:217.87px;top:313.82px;font-size:12.50px;line-height:12.50px;color:#222;font-weight:normal;white-space:nowrap;transform:scaleX(0.9500);transform-origin:0 0;-webkit-text-stroke:0.3px #222;">$</div>
<div style="position:absolute;left:266px;top:321px;width:3px;height:1.3px;background:#222;"></div>
<div style="position:absolute;left:295.87px;top:313.82px;font-size:12.50px;line-height:12.50px;color:#222;font-weight:normal;white-space:nowrap;transform:scaleX(0.9500);transform-origin:0 0;-webkit-text-stroke:0.3px #222;">$</div>
<div style="position:absolute;left:344px;top:321px;width:3px;height:1.3px;background:#222;"></div>
<div style="position:absolute;left:373.87px;top:313.82px;font-size:12.50px;line-height:12.50px;color:#222;font-weight:normal;white-space:nowrap;transform:scaleX(0.9500);transform-origin:0 0;-webkit-text-stroke:0.3px #222;">$</div>
<div style="position:absolute;left:422px;top:321px;width:3px;height:1.3px;background:#222;"></div>
<div style="position:absolute;left:451.87px;top:313.82px;font-size:12.50px;line-height:12.50px;color:#222;font-weight:normal;white-space:nowrap;transform:scaleX(0.9500);transform-origin:0 0;-webkit-text-stroke:0.3px #222;">$</div>
<div style="position:absolute;left:500px;top:321px;width:3px;height:1.3px;background:#222;"></div>
<div style="position:absolute;left:529.87px;top:313.82px;font-size:12.50px;line-height:12.50px;color:#222;font-weight:normal;white-space:nowrap;transform:scaleX(0.9500);transform-origin:0 0;-webkit-text-stroke:0.3px #222;">$</div>
<div style="position:absolute;left:578px;top:321px;width:3px;height:1.3px;background:#222;"></div>
<div style="position:absolute;left:607.87px;top:313.82px;font-size:12.50px;line-height:12.50px;color:#222;font-weight:normal;white-space:nowrap;transform:scaleX(0.9500);transform-origin:0 0;-webkit-text-stroke:0.3px #222;">$</div>
<div style="position:absolute;left:656px;top:321px;width:3px;height:1.3px;background:#222;"></div>
<div style="position:absolute;left:685.87px;top:313.82px;font-size:12.50px;line-height:12.50px;color:#222;font-weight:normal;white-space:nowrap;transform:scaleX(0.9500);transform-origin:0 0;-webkit-text-stroke:0.3px #222;">$</div>
<div style="position:absolute;left:734px;top:321px;width:3px;height:1.3px;background:#222;"></div>
<div style="position:absolute;left:763.87px;top:313.82px;font-size:12.50px;line-height:12.50px;color:#222;font-weight:normal;white-space:nowrap;transform:scaleX(0.9500);transform-origin:0 0;-webkit-text-stroke:0.3px #222;">$</div>
<div style="position:absolute;left:812px;top:321px;width:3px;height:1.3px;background:#222;"></div>
<div style="position:absolute;left:841.87px;top:313.82px;font-size:12.50px;line-height:12.50px;color:#222;font-weight:normal;white-space:nowrap;transform:scaleX(0.9500);transform-origin:0 0;-webkit-text-stroke:0.3px #222;">$</div>
<div style="position:absolute;left:890px;top:321px;width:3px;height:1.3px;background:#222;"></div>
<div style="position:absolute;left:919.87px;top:313.82px;font-size:12.50px;line-height:12.50px;color:#222;font-weight:normal;white-space:nowrap;transform:scaleX(0.9500);transform-origin:0 0;-webkit-text-stroke:0.3px #222;">$</div>
<div style="position:absolute;left:968px;top:321px;width:3px;height:1.3px;background:#222;"></div>
<div style="position:absolute;left:997.87px;top:313.82px;font-size:12.50px;line-height:12.50px;color:#222;font-weight:normal;white-space:nowrap;transform:scaleX(0.9500);transform-origin:0 0;-webkit-text-stroke:0.3px #222;">$</div>
<div style="position:absolute;left:1046px;top:321px;width:3px;height:1.3px;background:#222;"></div>
<div style="position:absolute;left:1075.87px;top:313.82px;font-size:12.50px;line-height:12.50px;color:#222;font-weight:normal;white-space:nowrap;transform:scaleX(0.9500);transform-origin:0 0;-webkit-text-stroke:0.3px #222;">$</div>
<div style="position:absolute;left:1129px;top:321px;width:3px;height:1.3px;background:#222;"></div>
<div style="position:absolute;left:139.87px;top:430.82px;font-size:12.50px;line-height:12.50px;color:#222;font-weight:normal;white-space:nowrap;transform:scaleX(0.9500);transform-origin:0 0;-webkit-text-stroke:0.3px #222;">$</div>
<div style="position:absolute;left:188px;top:438px;width:3px;height:1.3px;background:#222;"></div>
<div style="position:absolute;left:217.87px;top:430.82px;font-size:12.50px;line-height:12.50px;color:#222;font-weight:normal;white-space:nowrap;transform:scaleX(0.9500);transform-origin:0 0;-webkit-text-stroke:0.3px #222;">$</div>
<div style="position:absolute;left:266px;top:438px;width:3px;height:1.3px;background:#222;"></div>
<div style="position:absolute;left:295.87px;top:430.82px;font-size:12.50px;line-height:12.50px;color:#222;font-weight:normal;white-space:nowrap;transform:scaleX(0.9500);transform-origin:0 0;-webkit-text-stroke:0.3px #222;">$</div>
<div style="position:absolute;left:344px;top:438px;width:3px;height:1.3px;background:#222;"></div>
<div style="position:absolute;left:373.87px;top:430.82px;font-size:12.50px;line-height:12.50px;color:#222;font-weight:normal;white-space:nowrap;transform:scaleX(0.9500);transform-origin:0 0;-webkit-text-stroke:0.3px #222;">$</div>
<div style="position:absolute;left:422px;top:438px;width:3px;height:1.3px;background:#222;"></div>
<div style="position:absolute;left:451.87px;top:430.82px;font-size:12.50px;line-height:12.50px;color:#222;font-weight:normal;white-space:nowrap;transform:scaleX(0.9500);transform-origin:0 0;-webkit-text-stroke:0.3px #222;">$</div>
<div style="position:absolute;left:500px;top:438px;width:3px;height:1.3px;background:#222;"></div>
<div style="position:absolute;left:529.87px;top:430.82px;font-size:12.50px;line-height:12.50px;color:#222;font-weight:normal;white-space:nowrap;transform:scaleX(0.9500);transform-origin:0 0;-webkit-text-stroke:0.3px #222;">$</div>
<div style="position:absolute;left:578px;top:438px;width:3px;height:1.3px;background:#222;"></div>
<div style="position:absolute;left:607.87px;top:430.82px;font-size:12.50px;line-height:12.50px;color:#222;font-weight:normal;white-space:nowrap;transform:scaleX(0.9500);transform-origin:0 0;-webkit-text-stroke:0.3px #222;">$</div>
<div style="position:absolute;left:656px;top:438px;width:3px;height:1.3px;background:#222;"></div>
<div style="position:absolute;left:685.87px;top:430.82px;font-size:12.50px;line-height:12.50px;color:#222;font-weight:normal;white-space:nowrap;transform:scaleX(0.9500);transform-origin:0 0;-webkit-text-stroke:0.3px #222;">$</div>
<div style="position:absolute;left:734px;top:438px;width:3px;height:1.3px;background:#222;"></div>
<div style="position:absolute;left:763.87px;top:430.82px;font-size:12.50px;line-height:12.50px;color:#222;font-weight:normal;white-space:nowrap;transform:scaleX(0.9500);transform-origin:0 0;-webkit-text-stroke:0.3px #222;">$</div>
<div style="position:absolute;left:812px;top:438px;width:3px;height:1.3px;background:#222;"></div>
<div style="position:absolute;left:841.87px;top:430.82px;font-size:12.50px;line-height:12.50px;color:#222;font-weight:normal;white-space:nowrap;transform:scaleX(0.9500);transform-origin:0 0;-webkit-text-stroke:0.3px #222;">$</div>
<div style="position:absolute;left:890px;top:438px;width:3px;height:1.3px;background:#222;"></div>
<div style="position:absolute;left:919.87px;top:430.82px;font-size:12.50px;line-height:12.50px;color:#222;font-weight:normal;white-space:nowrap;transform:scaleX(0.9500);transform-origin:0 0;-webkit-text-stroke:0.3px #222;">$</div>
<div style="position:absolute;left:968px;top:438px;width:3px;height:1.3px;background:#222;"></div>
<div style="position:absolute;left:997.87px;top:430.82px;font-size:12.50px;line-height:12.50px;color:#222;font-weight:normal;white-space:nowrap;transform:scaleX(0.9500);transform-origin:0 0;-webkit-text-stroke:0.3px #222;">$</div>
<div style="position:absolute;left:1046px;top:438px;width:3px;height:1.3px;background:#222;"></div>
<div style="position:absolute;left:1129px;top:438px;width:3px;height:1.3px;background:#222;"></div>
<div style="position:absolute;left:139.87px;top:469.82px;font-size:12.50px;line-height:12.50px;color:#222;font-weight:normal;white-space:nowrap;transform:scaleX(0.9500);transform-origin:0 0;-webkit-text-stroke:0.3px #222;">$</div>
<div style="position:absolute;left:188px;top:477px;width:3px;height:1.3px;background:#222;"></div>
<div style="position:absolute;left:217.87px;top:469.82px;font-size:12.50px;line-height:12.50px;color:#222;font-weight:normal;white-space:nowrap;transform:scaleX(0.9500);transform-origin:0 0;-webkit-text-stroke:0.3px #222;">$</div>
<div style="position:absolute;left:266px;top:477px;width:3px;height:1.3px;background:#222;"></div>
<div style="position:absolute;left:295.87px;top:469.82px;font-size:12.50px;line-height:12.50px;color:#222;font-weight:normal;white-space:nowrap;transform:scaleX(0.9500);transform-origin:0 0;-webkit-text-stroke:0.3px #222;">$</div>
<div style="position:absolute;left:344px;top:477px;width:3px;height:1.3px;background:#222;"></div>
<div style="position:absolute;left:373.87px;top:469.82px;font-size:12.50px;line-height:12.50px;color:#222;font-weight:normal;white-space:nowrap;transform:scaleX(0.9500);transform-origin:0 0;-webkit-text-stroke:0.3px #222;">$</div>
<div style="position:absolute;left:422px;top:477px;width:3px;height:1.3px;background:#222;"></div>
<div style="position:absolute;left:451.87px;top:469.82px;font-size:12.50px;line-height:12.50px;color:#222;font-weight:normal;white-space:nowrap;transform:scaleX(0.9500);transform-origin:0 0;-webkit-text-stroke:0.3px #222;">$</div>
<div style="position:absolute;left:500px;top:477px;width:3px;height:1.3px;background:#222;"></div>
<div style="position:absolute;left:529.87px;top:469.82px;font-size:12.50px;line-height:12.50px;color:#222;font-weight:normal;white-space:nowrap;transform:scaleX(0.9500);transform-origin:0 0;-webkit-text-stroke:0.3px #222;">$</div>
<div style="position:absolute;left:578px;top:477px;width:3px;height:1.3px;background:#222;"></div>
<div style="position:absolute;left:607.87px;top:469.82px;font-size:12.50px;line-height:12.50px;color:#222;font-weight:normal;white-space:nowrap;transform:scaleX(0.9500);transform-origin:0 0;-webkit-text-stroke:0.3px #222;">$</div>
<div style="position:absolute;left:656px;top:477px;width:3px;height:1.3px;background:#222;"></div>
<div style="position:absolute;left:685.87px;top:469.82px;font-size:12.50px;line-height:12.50px;color:#222;font-weight:normal;white-space:nowrap;transform:scaleX(0.9500);transform-origin:0 0;-webkit-text-stroke:0.3px #222;">$</div>
<div style="position:absolute;left:734px;top:477px;width:3px;height:1.3px;background:#222;"></div>
<div style="position:absolute;left:763.87px;top:469.82px;font-size:12.50px;line-height:12.50px;color:#222;font-weight:normal;white-space:nowrap;transform:scaleX(0.9500);transform-origin:0 0;-webkit-text-stroke:0.3px #222;">$</div>
<div style="position:absolute;left:812px;top:477px;width:3px;height:1.3px;background:#222;"></div>
<div style="position:absolute;left:841.87px;top:469.82px;font-size:12.50px;line-height:12.50px;color:#222;font-weight:normal;white-space:nowrap;transform:scaleX(0.9500);transform-origin:0 0;-webkit-text-stroke:0.3px #222;">$</div>
<div style="position:absolute;left:890px;top:477px;width:3px;height:1.3px;background:#222;"></div>
<div style="position:absolute;left:919.87px;top:469.82px;font-size:12.50px;line-height:12.50px;color:#222;font-weight:normal;white-space:nowrap;transform:scaleX(0.9500);transform-origin:0 0;-webkit-text-stroke:0.3px #222;">$</div>
<div style="position:absolute;left:968px;top:477px;width:3px;height:1.3px;background:#222;"></div>
<div style="position:absolute;left:997.87px;top:469.82px;font-size:12.50px;line-height:12.50px;color:#222;font-weight:normal;white-space:nowrap;transform:scaleX(0.9500);transform-origin:0 0;-webkit-text-stroke:0.3px #222;">$</div>
<div style="position:absolute;left:1046px;top:477px;width:3px;height:1.3px;background:#222;"></div>
<div style="position:absolute;left:1075.87px;top:469.82px;font-size:12.50px;line-height:12.50px;color:#222;font-weight:normal;white-space:nowrap;transform:scaleX(0.9500);transform-origin:0 0;-webkit-text-stroke:0.3px #222;">$</div>
<div style="position:absolute;left:1129px;top:477px;width:3px;height:1.3px;background:#222;"></div>
<div style="position:absolute;left:139.87px;top:508.82px;font-size:12.50px;line-height:12.50px;color:#a9434a;font-weight:normal;white-space:nowrap;transform:scaleX(0.9500);transform-origin:0 0;-webkit-text-stroke:0.3px #a9434a;">$</div>
<div style="position:absolute;left:188px;top:516px;width:3px;height:1.3px;background:#a9434a;"></div>
<div style="position:absolute;left:217.87px;top:508.82px;font-size:12.50px;line-height:12.50px;color:#a9434a;font-weight:normal;white-space:nowrap;transform:scaleX(0.9500);transform-origin:0 0;-webkit-text-stroke:0.3px #a9434a;">$</div>
<div style="position:absolute;left:266px;top:516px;width:3px;height:1.3px;background:#a9434a;"></div>
<div style="position:absolute;left:295.87px;top:508.82px;font-size:12.50px;line-height:12.50px;color:#a9434a;font-weight:normal;white-space:nowrap;transform:scaleX(0.9500);transform-origin:0 0;-webkit-text-stroke:0.3px #a9434a;">$</div>
<div style="position:absolute;left:344px;top:516px;width:3px;height:1.3px;background:#a9434a;"></div>
<div style="position:absolute;left:373.87px;top:508.82px;font-size:12.50px;line-height:12.50px;color:#a9434a;font-weight:normal;white-space:nowrap;transform:scaleX(0.9500);transform-origin:0 0;-webkit-text-stroke:0.3px #a9434a;">$</div>
<div style="position:absolute;left:422px;top:516px;width:3px;height:1.3px;background:#a9434a;"></div>
<div style="position:absolute;left:451.87px;top:508.82px;font-size:12.50px;line-height:12.50px;color:#a9434a;font-weight:normal;white-space:nowrap;transform:scaleX(0.9500);transform-origin:0 0;-webkit-text-stroke:0.3px #a9434a;">$</div>
<div style="position:absolute;left:500px;top:516px;width:3px;height:1.3px;background:#a9434a;"></div>
<div style="position:absolute;left:529.87px;top:508.82px;font-size:12.50px;line-height:12.50px;color:#a9434a;font-weight:normal;white-space:nowrap;transform:scaleX(0.9500);transform-origin:0 0;-webkit-text-stroke:0.3px #a9434a;">$</div>
<div style="position:absolute;left:578px;top:516px;width:3px;height:1.3px;background:#a9434a;"></div>
<div style="position:absolute;left:607.87px;top:508.82px;font-size:12.50px;line-height:12.50px;color:#a9434a;font-weight:normal;white-space:nowrap;transform:scaleX(0.9500);transform-origin:0 0;-webkit-text-stroke:0.3px #a9434a;">$</div>
<div style="position:absolute;left:656px;top:516px;width:3px;height:1.3px;background:#a9434a;"></div>
<div style="position:absolute;left:685.87px;top:508.82px;font-size:12.50px;line-height:12.50px;color:#a9434a;font-weight:normal;white-space:nowrap;transform:scaleX(0.9500);transform-origin:0 0;-webkit-text-stroke:0.3px #a9434a;">$</div>
<div style="position:absolute;left:734px;top:516px;width:3px;height:1.3px;background:#a9434a;"></div>
<div style="position:absolute;left:763.87px;top:508.82px;font-size:12.50px;line-height:12.50px;color:#a9434a;font-weight:normal;white-space:nowrap;transform:scaleX(0.9500);transform-origin:0 0;-webkit-text-stroke:0.3px #a9434a;">$</div>
<div style="position:absolute;left:812px;top:516px;width:3px;height:1.3px;background:#a9434a;"></div>
<div style="position:absolute;left:841.87px;top:508.82px;font-size:12.50px;line-height:12.50px;color:#a9434a;font-weight:normal;white-space:nowrap;transform:scaleX(0.9500);transform-origin:0 0;-webkit-text-stroke:0.3px #a9434a;">$</div>
<div style="position:absolute;left:890px;top:516px;width:3px;height:1.3px;background:#a9434a;"></div>
<div style="position:absolute;left:919.87px;top:508.82px;font-size:12.50px;line-height:12.50px;color:#a9434a;font-weight:normal;white-space:nowrap;transform:scaleX(0.9500);transform-origin:0 0;-webkit-text-stroke:0.3px #a9434a;">$</div>
<div style="position:absolute;left:968px;top:516px;width:3px;height:1.3px;background:#a9434a;"></div>
<div style="position:absolute;left:997.87px;top:508.82px;font-size:12.50px;line-height:12.50px;color:#a9434a;font-weight:normal;white-space:nowrap;transform:scaleX(0.9500);transform-origin:0 0;-webkit-text-stroke:0.3px #a9434a;">$</div>
<div style="position:absolute;left:1046px;top:516px;width:3px;height:1.3px;background:#a9434a;"></div>
<div style="position:absolute;left:1075.87px;top:508.82px;font-size:12.50px;line-height:12.50px;color:#a9434a;font-weight:normal;white-space:nowrap;transform:scaleX(0.9500);transform-origin:0 0;-webkit-text-stroke:0.3px #a9434a;">$</div>
<div style="position:absolute;left:1129px;top:516px;width:3px;height:1.3px;background:#a9434a;"></div>
<div style="position:absolute;left:1232.94px;top:217.62px;font-size:12.50px;line-height:12.50px;color:#111;font-weight:normal;white-space:nowrap;transform:scaleX(1.0300);transform-origin:0 0;-webkit-text-stroke:0.3px #111;">Portion of Budget</div>
<div style="position:absolute;left:1154.51px;top:236.82px;font-size:12.50px;line-height:12.50px;color:#111;font-weight:normal;white-space:nowrap;transform:scaleX(0.9700);transform-origin:0 0;-webkit-text-stroke:0.3px #111;">Necessities</div>
<div style="position:absolute;left:1236.87px;top:236.62px;font-size:12.50px;line-height:12.50px;color:#111;font-weight:normal;white-space:nowrap;transform:scaleX(0.9500);transform-origin:0 0;-webkit-text-stroke:0.3px #111;">$</div>
<div style="position:absolute;left:1340px;top:243px;width:3px;height:1.3px;background:#333;"></div>
<div style="position:absolute;left:1154.51px;top:255.82px;font-size:12.50px;line-height:12.50px;color:#111;font-weight:normal;white-space:nowrap;transform:scaleX(0.9700);transform-origin:0 0;-webkit-text-stroke:0.3px #111;">Luxuries</div>
<div style="position:absolute;left:1236.87px;top:255.62px;font-size:12.50px;line-height:12.50px;color:#111;font-weight:normal;white-space:nowrap;transform:scaleX(0.9500);transform-origin:0 0;-webkit-text-stroke:0.3px #111;">$</div>
<div style="position:absolute;left:1340px;top:262px;width:3px;height:1.3px;background:#333;"></div>
<div style="position:absolute;left:1154.95px;top:274.82px;font-size:12.50px;line-height:12.50px;color:#111;font-weight:normal;white-space:nowrap;transform:scaleX(0.9700);transform-origin:0 0;-webkit-text-stroke:0.3px #111;">Saved</div>
<div style="position:absolute;left:1236.87px;top:274.62px;font-size:12.50px;line-height:12.50px;color:#111;font-weight:normal;white-space:nowrap;transform:scaleX(0.9500);transform-origin:0 0;-webkit-text-stroke:0.3px #111;">$</div>
<div style="position:absolute;left:1340px;top:281px;width:3px;height:1.3px;background:#333;"></div>
<div style="position:absolute;left:157.5px;top:198.6px;font-size:13px;line-height:13px;color:#1a1a1a;white-space:nowrap;transform:rotate(-45deg) scaleX(0.93);transform-origin:0 11.0px;-webkit-text-stroke:0.1px #1a1a1a;">January</div>
<div style="position:absolute;left:235.5px;top:198.6px;font-size:13px;line-height:13px;color:#1a1a1a;white-space:nowrap;transform:rotate(-45deg) scaleX(0.93);transform-origin:0 11.0px;-webkit-text-stroke:0.1px #1a1a1a;">February</div>
<div style="position:absolute;left:313.5px;top:198.6px;font-size:13px;line-height:13px;color:#1a1a1a;white-space:nowrap;transform:rotate(-45deg) scaleX(0.93);transform-origin:0 11.0px;-webkit-text-stroke:0.1px #1a1a1a;">March</div>
<div style="position:absolute;left:391.5px;top:198.6px;font-size:13px;line-height:13px;color:#1a1a1a;white-space:nowrap;transform:rotate(-45deg) scaleX(0.93);transform-origin:0 11.0px;-webkit-text-stroke:0.1px #1a1a1a;">April</div>
<div style="position:absolute;left:469.5px;top:198.6px;font-size:13px;line-height:13px;color:#1a1a1a;white-space:nowrap;transform:rotate(-45deg) scaleX(0.93);transform-origin:0 11.0px;-webkit-text-stroke:0.1px #1a1a1a;">May</div>
<div style="position:absolute;left:547.5px;top:198.6px;font-size:13px;line-height:13px;color:#1a1a1a;white-space:nowrap;transform:rotate(-45deg) scaleX(0.93);transform-origin:0 11.0px;-webkit-text-stroke:0.1px #1a1a1a;">June</div>
<div style="position:absolute;left:625.5px;top:198.6px;font-size:13px;line-height:13px;color:#1a1a1a;white-space:nowrap;transform:rotate(-45deg) scaleX(0.93);transform-origin:0 11.0px;-webkit-text-stroke:0.1px #1a1a1a;">July</div>
<div style="position:absolute;left:703.5px;top:198.6px;font-size:13px;line-height:13px;color:#1a1a1a;white-space:nowrap;transform:rotate(-45deg) scaleX(0.93);transform-origin:0 11.0px;-webkit-text-stroke:0.1px #1a1a1a;">August</div>
<div style="position:absolute;left:781.5px;top:198.6px;font-size:13px;line-height:13px;color:#1a1a1a;white-space:nowrap;transform:rotate(-45deg) scaleX(0.93);transform-origin:0 11.0px;-webkit-text-stroke:0.1px #1a1a1a;">September</div>
<div style="position:absolute;left:859.5px;top:198.6px;font-size:13px;line-height:13px;color:#1a1a1a;white-space:nowrap;transform:rotate(-45deg) scaleX(0.93);transform-origin:0 11.0px;-webkit-text-stroke:0.1px #1a1a1a;">October</div>
<div style="position:absolute;left:937.5px;top:198.6px;font-size:13px;line-height:13px;color:#1a1a1a;white-space:nowrap;transform:rotate(-45deg) scaleX(0.93);transform-origin:0 11.0px;-webkit-text-stroke:0.1px #1a1a1a;">November</div>
<div style="position:absolute;left:1015.5px;top:198.6px;font-size:13px;line-height:13px;color:#1a1a1a;white-space:nowrap;transform:rotate(-45deg) scaleX(0.93);transform-origin:0 11.0px;-webkit-text-stroke:0.1px #1a1a1a;">December</div>
<div style="position:absolute;left:1093.5px;top:198.6px;font-size:13px;line-height:13px;color:#1a1a1a;white-space:nowrap;transform:rotate(-45deg) scaleX(0.93);transform-origin:0 11.0px;-webkit-text-stroke:0.1px #1a1a1a;">Total</div>
<div style="position:absolute;left:38.5px;top:271.0px;font-size:12.5px;line-height:12.5px;color:#111;white-space:nowrap;transform:translate(-50%,-50%) rotate(-90deg) scaleX(0.95);-webkit-text-stroke:0.3px #111;">Necessities</div>
<div style="position:absolute;left:38.5px;top:397.5px;font-size:12.5px;line-height:12.5px;color:#111;white-space:nowrap;transform:translate(-50%,-50%) rotate(-90deg) scaleX(0.95);-webkit-text-stroke:0.3px #111;">Luxuries</div>
<div style="position:absolute;left:134px;top:214px;width:1px;height:309px;background:#fff;"></div>
<div style="position:absolute;left:1150px;top:214px;width:1px;height:309px;background:#fff;"></div>
<div style="position:absolute;left:134px;top:522px;width:1016px;height:1px;background:rgba(255,255,255,0.7);"></div>
<div style="position:absolute;left:132px;top:212px;width:1021px;height:2px;background:repeating-linear-gradient(90deg,#217a45 0 5px,#6aa985 5px 7px);"></div>
<div style="position:absolute;left:132px;top:523px;width:1021px;height:2px;background:repeating-linear-gradient(90deg,#217a45 0 5px,#6aa985 5px 7px);"></div>
<div style="position:absolute;left:132px;top:212px;width:2px;height:313px;background:repeating-linear-gradient(180deg,#217a45 0 5px,#6aa985 5px 7px);"></div>
<div style="position:absolute;left:1152px;top:212px;width:2px;height:313px;background:repeating-linear-gradient(180deg,#217a45 0 5px,#6aa985 5px 7px);"></div>
<div style="position:absolute;left:1150px;top:521px;width:6px;height:6px;background:#217a45;border:1px solid #fff;box-sizing:border-box;"></div>
<div style="position:absolute;left:710px;top:95px;width:154px;height:20px;background:#f6f6f6;border:1px solid #cfcfcf;box-sizing:border-box;box-shadow:0 1px 3px rgba(0,0,0,0.25);"></div>
<div style="position:absolute;left:713.48px;top:99.22px;font-size:12.50px;line-height:12.50px;color:#222;font-weight:normal;white-space:nowrap;transform:scaleX(0.9396);transform-origin:0 0;-webkit-text-stroke:0.25px #222;">Accounting Number Format</div>
<svg style="left:0;top:0" width="1439" height="562"><defs><filter id="sh" x="-20%" y="-20%" width="140%" height="140%"><feGaussianBlur in="SourceAlpha" stdDeviation="1.3"/><feOffset dx="2.5" dy="2.5" result="o"/><feComponentTransfer><feFuncA type="linear" slope="0.65"/></feComponentTransfer><feMerge><feMergeNode/><feMergeNode in="SourceGraphic"/></feMerge></filter><filter id="shc" x="-30%" y="-30%" width="160%" height="160%"><feGaussianBlur in="SourceAlpha" stdDeviation="1.5"/><feOffset dx="1" dy="2" result="o"/><feComponentTransfer><feFuncA type="linear" slope="0.45"/></feComponentTransfer><feMerge><feMergeNode/><feMergeNode in="SourceGraphic"/></feMerge></filter></defs><g filter="url(#sh)"><path d="M179,225 L186,225 L186,291 L194.5,291 L182.4,310 L170,291 L179,291 Z" fill="#ec5f4e"/><path d="M215,328.1 L1052.2,328.1 L1051.2,319.6 L1072.5,331.8 L1051.2,344.0 L1052.2,335.5 L215,335.5 Z" fill="#ec5f4e"/><path d="M215,431.7 L1064.6,431.7 L1063.6,424.2 L1083.7,435.4 L1063.6,446.59999999999997 L1064.6,439.09999999999997 L215,439.09999999999997 Z" fill="#ec5f4e"/><path d="M215,476.7 L1067.5,476.7 L1066.5,469.0 L1088.4,480.4 L1066.5,491.79999999999995 L1067.5,484.09999999999997 L215,484.09999999999997 Z" fill="#ec5f4e"/><path d="M215,521.3 L1066.7,521.3 L1065.7,513.6 L1087.7,525.0 L1065.7,536.4 L1066.7,528.7 L215,528.7 Z" fill="#ec5f4e"/><path d="M1149,322 C1200,325 1260,326 1284,311" fill="none" stroke="#ec5f4e" stroke-width="7" stroke-linecap="round"/><path d="M1151,434 C1205,415 1268,400 1284,312" fill="none" stroke="#ec5f4e" stroke-width="7" stroke-linecap="round"/><path d="M1151,517 C1210,470 1275,420 1290,312" fill="none" stroke="#ec5f4e" stroke-width="7" stroke-linecap="round"/><path d="M1289,287 L1303,312 L1288,308 L1274,307 Z" fill="#ec5f4e"/></g><g filter="url(#shc)"><circle cx="690.2" cy="104" r="19.8" fill="#e7493d"/></g><g filter="url(#shc)"><circle cx="1206.5" cy="38" r="19.8" fill="#e7493d"/></g><g filter="url(#shc)"><circle cx="182.5" cy="213.5" r="19.8" fill="#e7493d"/></g><g filter="url(#shc)"><circle cx="209" cy="330" r="19.8" fill="#e7493d"/></g><g filter="url(#shc)"><circle cx="210" cy="433.6" r="19.8" fill="#e7493d"/></g><g filter="url(#shc)"><circle cx="210.6" cy="482.2" r="19.8" fill="#e7493d"/></g><g filter="url(#shc)"><circle cx="210" cy="525.8" r="19.8" fill="#e7493d"/></g><g filter="url(#shc)"><circle cx="1289" cy="193" r="19.8" fill="#e7493d"/></g></svg>
<div style="position:absolute;left:683.41px;top:93.77px;font-size:20.35px;line-height:20.35px;color:#fff;font-weight:normal;white-space:nowrap;-webkit-text-stroke:0.8px #fff;">A</div>
<div style="position:absolute;left:1199.42px;top:27.77px;font-size:20.35px;line-height:20.35px;color:#fff;font-weight:normal;white-space:nowrap;-webkit-text-stroke:0.8px #fff;">B</div>
<div style="position:absolute;left:175.42px;top:203.27px;font-size:20.35px;line-height:20.35px;color:#fff;font-weight:normal;white-space:nowrap;-webkit-text-stroke:0.8px #fff;">B</div>
<div style="position:absolute;left:201.52px;top:319.77px;font-size:20.35px;line-height:20.35px;color:#fff;font-weight:normal;white-space:nowrap;-webkit-text-stroke:0.8px #fff;">C</div>
<div style="position:absolute;left:202.52px;top:423.37px;font-size:20.35px;line-height:20.35px;color:#fff;font-weight:normal;white-space:nowrap;-webkit-text-stroke:0.8px #fff;">C</div>
<div style="position:absolute;left:202.90px;top:471.97px;font-size:20.35px;line-height:20.35px;color:#fff;font-weight:normal;white-space:nowrap;-webkit-text-stroke:0.8px #fff;">D</div>
<div style="position:absolute;left:202.82px;top:515.57px;font-size:20.35px;line-height:20.35px;color:#fff;font-weight:normal;white-space:nowrap;-webkit-text-stroke:0.8px #fff;">E</div>
<div style="position:absolute;left:1282.36px;top:182.77px;font-size:20.35px;line-height:20.35px;color:#fff;font-weight:normal;white-space:nowrap;-webkit-text-stroke:0.8px #fff;">F</div>
</body></html>
